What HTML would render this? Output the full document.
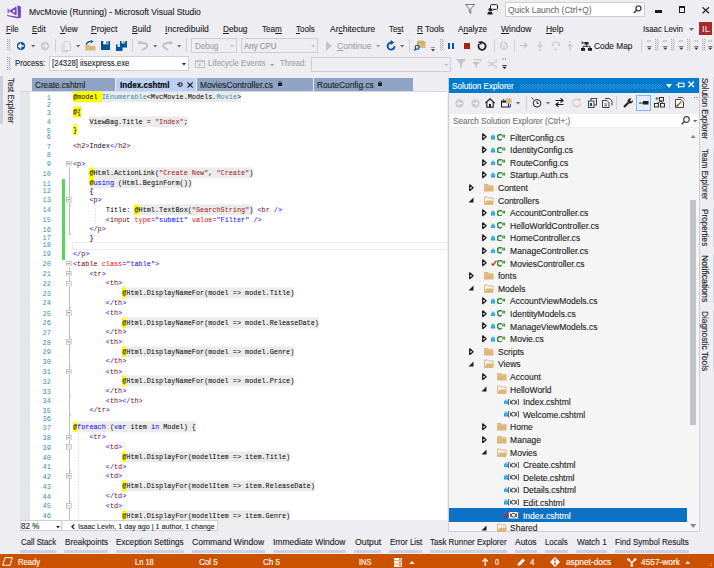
<!DOCTYPE html><html><head><meta charset="utf-8"><style>
html,body{margin:0;padding:0;}
body{width:714px;height:568px;position:relative;overflow:hidden;background:#EEEEF2;font-family:"Liberation Sans",sans-serif;}
.t{position:absolute;white-space:pre;line-height:1;-webkit-text-stroke:0.12px currentColor;}
.b{position:absolute;}
.m{font-family:"Liberation Mono",monospace;}
u{text-decoration:underline;text-decoration-thickness:0.9px;text-underline-offset:1px;}
</style></head><body>
<svg class="b" style="left:6px;top:4px;" width="16" height="16" viewBox="0 0 16 16"><path d="M11.4 1.2 L14.9 2.4 V13.6 L12 14.6 Z" fill="#7646C2"/><path d="M1 11 L11.5 12.7 L12 14.6 L1 11.9 Z" fill="#7646C2"/><path d="M1.5 4 L4.8 7 L1.5 10 Z" fill="#9A7AD4"/><path d="M4.6 7 L9.8 3.6 V10.4 Z" fill="none" stroke="#7646C2" stroke-width="1.6" stroke-linejoin="round"/></svg>
<div class="t " style="left:29.40px;top:8.04px;font-size:8.7px;color:#1E1E1E;transform-origin:0 0;transform:scaleX(0.9782);">MvcMovie (Running) - Microsoft Visual Studio</div>
<svg class="b" style="left:465px;top:4px;" width="10" height="10" viewBox="0 0 10 10"><path d="M0.5 0.5 H9.5 L5.8 5 V9.5 L4.2 8 V5 Z" fill="none" stroke="#717171" stroke-width="0.9"/></svg>
<svg class="b" style="left:487px;top:3.5px;" width="11" height="11" viewBox="0 0 11 11"><rect x="3.5" y="0.7" width="7" height="4.6" rx="1" fill="#fff" stroke="#1E1E1E" stroke-width="1"/><path d="M5 5.3 L4.5 7 L7 5.3" fill="#fff" stroke="#1E1E1E" stroke-width="0.8"/><circle cx="3" cy="5.5" r="1.6" fill="#1E1E1E"/><path d="M0.3 10.5 Q0.5 7.5 3 7.5 Q5.5 7.5 5.7 10.5 Z" fill="#1E1E1E"/></svg>
<div class="b" style="left:504.5px;top:1.5px;width:140px;height:15px;background:#fff;border:1px solid #CCCEDB;box-sizing:border-box;"></div>
<div class="t " style="left:508.30px;top:5.52px;font-size:8.6px;color:#717171;transform-origin:0 0;transform:scaleX(0.9757);">Quick Launch (Ctrl+Q)</div>
<svg class="b" style="left:633px;top:5px;" width="9" height="9" viewBox="0 0 9 9"><circle cx="5.5" cy="3.3" r="2.5" fill="none" stroke="#424242" stroke-width="1.3"/><path d="M3.7 5.1 L0.8 8" stroke="#424242" stroke-width="1.6"/></svg>
<div class="b" style="left:654.6px;top:9.8px;width:7px;height:2.8px;background:#1E1E1E;"></div>
<div class="b" style="left:678.7px;top:6.3px;width:6.8px;height:6.6px;border:1px solid #1E1E1E;border-top-width:2px;box-sizing:border-box;"></div>
<svg class="b" style="left:702px;top:7px;" width="7.5" height="6.5" viewBox="0 0 7.5 6.5"><path d="M0.5 0.3 L7 6.2 M7 0.3 L0.5 6.2" stroke="#1E1E1E" stroke-width="1.2"/></svg>
<div class="t " style="left:5.50px;top:24.64px;font-size:8.7px;color:#1E1E1E;transform-origin:0 0;transform:scaleX(0.8989);"><u>F</u>ile</div>
<div class="t " style="left:32.20px;top:24.64px;font-size:8.7px;color:#1E1E1E;transform-origin:0 0;transform:scaleX(0.9072);"><u>E</u>dit</div>
<div class="t " style="left:60.00px;top:24.64px;font-size:8.7px;color:#1E1E1E;transform-origin:0 0;transform:scaleX(0.9412);"><u>V</u>iew</div>
<div class="t " style="left:91.20px;top:24.64px;font-size:8.7px;color:#1E1E1E;transform-origin:0 0;transform:scaleX(0.9750);"><u>P</u>roject</div>
<div class="t " style="left:131.50px;top:24.64px;font-size:8.7px;color:#1E1E1E;transform-origin:0 0;transform:scaleX(0.9770);"><u>B</u>uild</div>
<div class="t " style="left:164.50px;top:24.64px;font-size:8.7px;color:#1E1E1E;transform-origin:0 0;transform:scaleX(0.9867);"><u>I</u>ncredibuild</div>
<div class="t " style="left:222.50px;top:24.64px;font-size:8.7px;color:#1E1E1E;transform-origin:0 0;transform:scaleX(0.9518);"><u>D</u>ebug</div>
<div class="t " style="left:261.50px;top:24.64px;font-size:8.7px;color:#1E1E1E;transform-origin:0 0;transform:scaleX(0.9355);">Tea<u>m</u></div>
<div class="t " style="left:296.00px;top:24.64px;font-size:8.7px;color:#1E1E1E;transform-origin:0 0;transform:scaleX(0.9306);"><u>T</u>ools</div>
<div class="t " style="left:329.60px;top:24.64px;font-size:8.7px;color:#1E1E1E;transform-origin:0 0;transform:scaleX(0.9760);">Ar<u>c</u>hitecture</div>
<div class="t " style="left:389.30px;top:24.64px;font-size:8.7px;color:#1E1E1E;transform-origin:0 0;transform:scaleX(0.8963);">Te<u>s</u>t</div>
<div class="t " style="left:417.00px;top:24.64px;font-size:8.7px;color:#1E1E1E;transform-origin:0 0;transform:scaleX(0.9428);"><u>R</u> Tools</div>
<div class="t " style="left:458.00px;top:24.64px;font-size:8.7px;color:#1E1E1E;transform-origin:0 0;transform:scaleX(0.9370);">A<u>n</u>alyze</div>
<div class="t " style="left:501.30px;top:24.64px;font-size:8.7px;color:#1E1E1E;transform-origin:0 0;transform:scaleX(0.9857);"><u>W</u>indow</div>
<div class="t " style="left:545.60px;top:24.64px;font-size:8.7px;color:#1E1E1E;transform-origin:0 0;transform:scaleX(0.9725);"><u>H</u>elp</div>
<div class="t " style="left:643.30px;top:24.64px;font-size:8.7px;color:#1E1E1E;transform-origin:0 0;transform:scaleX(0.9089);">Isaac Levin</div>
<svg class="b" style="left:688.5px;top:28px;" width="5" height="3" viewBox="0 0 5 3"><path d="M0 0 H5 L2.5 3 Z" fill="#717171"/></svg>
<div class="b" style="left:698.8px;top:21.9px;width:13.6px;height:13.5px;background:#A8282B;"></div>
<div class="t " style="left:701.60px;top:24.92px;font-size:8.6px;color:#F4E4E4;transform-origin:0 0;transform:scaleX(1.1155);-webkit-text-stroke:0;">IL</div>
<svg class="b" style="left:7px;top:39px;" width="4" height="12" viewBox="0 0 4 12"><pattern id="g109" width="2" height="2" patternUnits="userSpaceOnUse"><rect x="0" y="0" width="1" height="1" fill="#A8A8B0"/><rect x="1" y="1" width="1" height="1" fill="#D0D0D6"/></pattern><rect width="4" height="12" fill="url(#g109)"/></svg>
<svg class="b" style="left:16px;top:41px;" width="10" height="10" viewBox="0 0 10 10"><circle cx="5" cy="5" r="4.7" fill="#fff"/><circle cx="5" cy="5" r="4.1" fill="#00539C"/><path d="M7.8 5 H3 M5.2 2.6 L2.7 5 L5.2 7.4" stroke="#fff" stroke-width="1.5" fill="none"/></svg>
<svg class="b" style="left:30.9px;top:45.3px;" width="4.2" height="2.5" viewBox="0 0 4.2 2.5"><path d="M0 0 H4.2 L2.1 2.5 Z" fill="#717171"/></svg>
<svg class="b" style="left:40px;top:41px;" width="10" height="10" viewBox="0 0 10 10"><circle cx="5" cy="5" r="4.2" fill="#C8C8C8"/><path d="M2.3 5 H7 M4.8 2.8 L7.1 5 L4.8 7.2" stroke="#EEEEF2" stroke-width="1.3" fill="none"/></svg>
<div class="b" style="left:54.5px;top:39px;width:1px;height:13px;background:#CCCEDB;"></div>
<svg class="b" style="left:61px;top:40px;" width="11" height="12" viewBox="0 0 11 12"><path d="M3 1.5 H7 L9.5 4 V10.5 H3 Z" fill="none" stroke="#D0D0D0" stroke-width="1"/><path d="M1 3.5 V11.5 H7" fill="none" stroke="#D0D0D0" stroke-width="1"/></svg>
<svg class="b" style="left:75.9px;top:45.3px;" width="4.2" height="2.5" viewBox="0 0 4.2 2.5"><path d="M0 0 H4.2 L2.1 2.5 Z" fill="#717171"/></svg>
<svg class="b" style="left:85px;top:40px;" width="11" height="11" viewBox="0 0 11 11"><path d="M0.5 5 H4 L5 6 H10.5 V10.5 H0.5 Z" fill="#DCB67A"/><path d="M1 4.5 Q3 0.8 7 1.5" fill="none" stroke="#00539C" stroke-width="1.3"/><path d="M6 0 L8.5 1.6 L6.3 3.3 Z" fill="#00539C"/></svg>
<svg class="b" style="left:100.8px;top:41px;" width="9.5" height="9" viewBox="0 0 9.5 9"><path d="M0 0 H9.5 V9 H0 Z" fill="#00539C"/><rect x="2.3" y="0" width="5" height="3.3" fill="#fff"/><rect x="5.2" y="0.5" width="1.3" height="2.3" fill="#00539C"/></svg>
<svg class="b" style="left:116px;top:40.5px;" width="11" height="10" viewBox="0 0 11 10"><path d="M0 3.5 H6.5 V10 H0 Z" fill="#00539C"/><rect x="1.6" y="3.5" width="3.3" height="2.3" fill="#fff"/><path d="M4 0 H11 V6.5 H4 Z" fill="#00539C"/><rect x="5.6" y="0" width="3.6" height="2.4" fill="#fff"/><rect x="7.3" y="0.4" width="1" height="1.6" fill="#00539C"/></svg>
<div class="b" style="left:131.5px;top:39px;width:1px;height:13px;background:#CCCEDB;"></div>
<svg class="b" style="left:137.5px;top:41px;" width="10.5" height="9.5" viewBox="0 0 10.5 9.5"><path d="M0.3 0.2 H3.8 L0.3 3.7 Z" fill="#BDBDBD"/><path d="M1.5 2.2 H5.5 Q9.3 2.2 9.3 5 Q9.3 6.8 4 8.8" fill="none" stroke="#BDBDBD" stroke-width="1.7"/></svg>
<svg class="b" style="left:152.9px;top:45.3px;" width="4.2" height="2.5" viewBox="0 0 4.2 2.5"><path d="M0 0 H4.2 L2.1 2.5 Z" fill="#717171"/></svg>
<svg class="b" style="left:162px;top:41px;" width="10.5" height="9.5" viewBox="0 0 10.5 9.5"><path d="M6.7 0.2 H10.2 V3.7 Z" fill="#BDBDBD"/><path d="M9 2.2 H5 Q1.2 2.2 1.2 5 Q1.2 6.8 6.5 8.8" fill="none" stroke="#BDBDBD" stroke-width="1.7"/></svg>
<svg class="b" style="left:176.9px;top:45.3px;" width="4.2" height="2.5" viewBox="0 0 4.2 2.5"><path d="M0 0 H4.2 L2.1 2.5 Z" fill="#717171"/></svg>
<div class="b" style="left:186px;top:39px;width:1px;height:13px;background:#CCCEDB;"></div>
<div class="b" style="left:191px;top:38px;width:46px;height:15px;border:1px solid #CCCEDB;box-sizing:border-box;"></div>
<div class="t " style="left:194.50px;top:41.97px;font-size:8.3px;color:#A2A4A5;transform-origin:0 0;transform:scaleX(0.9609);">Debug</div>
<svg class="b" style="left:230.4px;top:45.3px;" width="4.2" height="2.5" viewBox="0 0 4.2 2.5"><path d="M0 0 H4.2 L2.1 2.5 Z" fill="#C4C4C4"/></svg>
<div class="b" style="left:241px;top:38px;width:76.5px;height:15px;border:1px solid #CCCEDB;box-sizing:border-box;"></div>
<div class="t " style="left:243.90px;top:41.97px;font-size:8.3px;color:#8E9092;transform-origin:0 0;transform:scaleX(0.9522);">Any CPU</div>
<svg class="b" style="left:311.4px;top:45.3px;" width="4.2" height="2.5" viewBox="0 0 4.2 2.5"><path d="M0 0 H4.2 L2.1 2.5 Z" fill="#C4C4C4"/></svg>
<svg class="b" style="left:325.5px;top:40.5px;" width="6" height="10" viewBox="0 0 6 10"><path d="M0 0 L6 5 L0 10 Z" fill="#C4C4C4"/></svg>
<div class="t " style="left:337.00px;top:41.97px;font-size:8.3px;color:#A2A4A5;transform-origin:0 0;transform:scaleX(1.0415);"><u>C</u>ontinue</div>
<svg class="b" style="left:375.9px;top:45.3px;" width="4.2" height="2.5" viewBox="0 0 4.2 2.5"><path d="M0 0 H4.2 L2.1 2.5 Z" fill="#A2A4A5"/></svg>
<svg class="b" style="left:385.5px;top:40px;" width="10" height="11" viewBox="0 0 10 11"><path d="M5.3 2.6 A3.5 3.5 0 1 0 8.6 6.3" fill="none" stroke="#00539C" stroke-width="1.9"/><path d="M4.6 0 L8.4 2.5 L4.6 5 Z" fill="#00539C"/></svg>
<svg class="b" style="left:399.9px;top:45.3px;" width="4.2" height="2.5" viewBox="0 0 4.2 2.5"><path d="M0 0 H4.2 L2.1 2.5 Z" fill="#717171"/></svg>
<div class="b" style="left:408.7px;top:39px;width:1px;height:13px;background:#CCCEDB;"></div>
<svg class="b" style="left:414px;top:40px;" width="12" height="11" viewBox="0 0 12 11"><path d="M3 0.5 H10 V1.5 H11.5 V8 H3 Z" fill="#DCB67A"/><rect x="3" y="2" width="8.5" height="1" fill="#C9A160"/><circle cx="3.2" cy="7.2" r="2" fill="none" stroke="#00539C" stroke-width="1.1"/><path d="M1.8 8.8 L0.3 10.5" stroke="#00539C" stroke-width="1.3"/></svg>
<svg class="b" style="left:430.5px;top:47px;" width="4" height="5" viewBox="0 0 4 5"><rect x="0" y="0" width="4" height="1" fill="#999"/><path d="M0 2 H4 L2 4.5 Z" fill="#424242"/></svg>
<svg class="b" style="left:439.5px;top:39px;" width="4" height="12" viewBox="0 0 4 12"><pattern id="g4434" width="2" height="2" patternUnits="userSpaceOnUse"><rect x="0" y="0" width="1" height="1" fill="#A8A8B0"/><rect x="1" y="1" width="1" height="1" fill="#D0D0D6"/></pattern><rect width="4" height="12" fill="url(#g4434)"/></svg>
<div class="b" style="left:448px;top:42.5px;width:2px;height:6.5px;background:#00539C;"></div>
<div class="b" style="left:451.5px;top:42.5px;width:2px;height:6.5px;background:#00539C;"></div>
<div class="b" style="left:463.6px;top:42.5px;width:6.5px;height:6.5px;background:#A1260D;"></div>
<svg class="b" style="left:477px;top:40.5px;" width="10" height="10" viewBox="0 0 10 10"><path d="M2.2 3 A3.6 3.6 0 1 0 5 1.6" fill="none" stroke="#1E1E1E" stroke-width="1.7"/><path d="M5.5 0 L1 0.8 L4 4 Z" fill="#1E1E1E"/></svg>
<div class="b" style="left:493.8px;top:39px;width:1px;height:13px;background:#CCCEDB;"></div>
<svg class="b" style="left:498.5px;top:40.5px;" width="9" height="10" viewBox="0 0 9 10"><path d="M2.5 3 A3.3 3.3 0 1 0 5 1.8" fill="none" stroke="#C4C4C4" stroke-width="1.2"/><path d="M4 0 L1.5 1.2 L3.5 3 Z" fill="#C4C4C4"/><circle cx="5" cy="5.5" r="0.9" fill="#C4C4C4"/></svg>
<div class="b" style="left:514px;top:39px;width:1px;height:13px;background:#CCCEDB;"></div>
<svg class="b" style="left:519.5px;top:42px;" width="8" height="7" viewBox="0 0 8 7"><path d="M0 3.5 H7 M4 0.7 L7 3.5 L4 6.3" fill="none" stroke="#C4C4C4" stroke-width="1.1"/></svg>
<svg class="b" style="left:536.5px;top:40.5px;" width="6" height="10" viewBox="0 0 6 10"><path d="M3 0 V6 M0.7 3.8 L3 6.3 L5.3 3.8" fill="none" stroke="#C4C4C4" stroke-width="1.1"/><circle cx="3" cy="8.7" r="1" fill="#C4C4C4"/></svg>
<svg class="b" style="left:550.5px;top:40.5px;" width="9" height="10" viewBox="0 0 9 10"><path d="M1 5 Q2 1 5 1 Q8 1 8.3 4.5" fill="none" stroke="#C4C4C4" stroke-width="1.1"/><path d="M6.5 3.5 L8.5 5.5 L9 3 Z" fill="#C4C4C4"/><circle cx="4.5" cy="8.5" r="1" fill="#C4C4C4"/></svg>
<svg class="b" style="left:567px;top:40.5px;" width="6" height="10" viewBox="0 0 6 10"><path d="M3 10 V3.5 M0.7 5.7 L3 3.2 L5.3 5.7" fill="none" stroke="#C4C4C4" stroke-width="1.1"/><circle cx="3" cy="0.9" r="0.9" fill="#C4C4C4"/></svg>
<svg class="b" style="left:580.5px;top:40.5px;" width="11" height="10" viewBox="0 0 11 10"><path d="M0.5 0 L4 1.8 L0.5 3.6 Z" fill="#388A34"/><rect x="3.5" y="1" width="4" height="2.5" fill="#1E1E1E"/><path d="M5.5 3.5 V5.3 M2 7 V5.3 H9 V7" fill="none" stroke="#1E1E1E" stroke-width="0.9"/><rect x="0" y="7" width="4" height="2.8" fill="#1E1E1E"/><rect x="7" y="7" width="4" height="2.8" fill="#1E1E1E"/></svg>
<div class="t " style="left:593.80px;top:41.80px;font-size:8.5px;color:#1E1E1E;transform-origin:0 0;transform:scaleX(0.9818);">Code Map</div>
<div class="b" style="left:640.6px;top:39px;width:1px;height:13px;background:#CCCEDB;"></div>
<svg class="b" style="left:646.5px;top:39.5px;" width="5" height="11" viewBox="0 0 5 11"><rect x="0.5" y="0.5" width="1" height="1" fill="#717171"/><rect x="2.8" y="0.5" width="1" height="1" fill="#717171"/><rect x="0.3" y="6" width="4" height="1.2" fill="#717171"/><path d="M0.3 7.8 H4.3 L2.3 10 Z" fill="#424242"/></svg>
<svg class="b" style="left:663px;top:39.5px;" width="5" height="11" viewBox="0 0 5 11"><rect x="0.5" y="0.5" width="1" height="1" fill="#717171"/><rect x="2.8" y="0.5" width="1" height="1" fill="#717171"/><rect x="0.3" y="6" width="4" height="1.2" fill="#717171"/><path d="M0.3 7.8 H4.3 L2.3 10 Z" fill="#424242"/></svg>
<svg class="b" style="left:679px;top:39.5px;" width="5" height="11" viewBox="0 0 5 11"><rect x="0.5" y="0.5" width="1" height="1" fill="#717171"/><rect x="2.8" y="0.5" width="1" height="1" fill="#717171"/><rect x="0.3" y="6" width="4" height="1.2" fill="#717171"/><path d="M0.3 7.8 H4.3 L2.3 10 Z" fill="#424242"/></svg>
<svg class="b" style="left:693.5px;top:39.5px;" width="5" height="11" viewBox="0 0 5 11"><rect x="0.5" y="0.5" width="1" height="1" fill="#717171"/><rect x="2.8" y="0.5" width="1" height="1" fill="#717171"/><rect x="0.3" y="6" width="4" height="1.2" fill="#717171"/><path d="M0.3 7.8 H4.3 L2.3 10 Z" fill="#424242"/></svg>
<svg class="b" style="left:708px;top:39.5px;" width="5" height="11" viewBox="0 0 5 11"><rect x="0.5" y="0.5" width="1" height="1" fill="#717171"/><rect x="2.8" y="0.5" width="1" height="1" fill="#717171"/><rect x="0.3" y="6" width="4" height="1.2" fill="#717171"/><path d="M0.3 7.8 H4.3 L2.3 10 Z" fill="#424242"/></svg>
<svg class="b" style="left:655px;top:39px;" width="4" height="12" viewBox="0 0 4 12"><pattern id="g6589" width="2" height="2" patternUnits="userSpaceOnUse"><rect x="0" y="0" width="1" height="1" fill="#A8A8B0"/><rect x="1" y="1" width="1" height="1" fill="#D0D0D6"/></pattern><rect width="4" height="12" fill="url(#g6589)"/></svg>
<svg class="b" style="left:671px;top:39px;" width="4" height="12" viewBox="0 0 4 12"><pattern id="g6749" width="2" height="2" patternUnits="userSpaceOnUse"><rect x="0" y="0" width="1" height="1" fill="#A8A8B0"/><rect x="1" y="1" width="1" height="1" fill="#D0D0D6"/></pattern><rect width="4" height="12" fill="url(#g6749)"/></svg>
<svg class="b" style="left:687px;top:39px;" width="4" height="12" viewBox="0 0 4 12"><pattern id="g6909" width="2" height="2" patternUnits="userSpaceOnUse"><rect x="0" y="0" width="1" height="1" fill="#A8A8B0"/><rect x="1" y="1" width="1" height="1" fill="#D0D0D6"/></pattern><rect width="4" height="12" fill="url(#g6909)"/></svg>
<svg class="b" style="left:702px;top:39px;" width="4" height="12" viewBox="0 0 4 12"><pattern id="g7059" width="2" height="2" patternUnits="userSpaceOnUse"><rect x="0" y="0" width="1" height="1" fill="#A8A8B0"/><rect x="1" y="1" width="1" height="1" fill="#D0D0D6"/></pattern><rect width="4" height="12" fill="url(#g7059)"/></svg>
<svg class="b" style="left:7px;top:56.5px;" width="4" height="13" viewBox="0 0 4 13"><pattern id="g126" width="2" height="2" patternUnits="userSpaceOnUse"><rect x="0" y="0" width="1" height="1" fill="#A8A8B0"/><rect x="1" y="1" width="1" height="1" fill="#D0D0D6"/></pattern><rect width="4" height="13" fill="url(#g126)"/></svg>
<div class="t " style="left:14.60px;top:59.25px;font-size:8.8px;color:#1E1E1E;transform-origin:0 0;transform:scaleX(0.8822);">Process:</div>
<div class="b" style="left:49px;top:56.2px;width:139.5px;height:15px;background:#fff;border:1px solid #CCCEDB;box-sizing:border-box;"></div>
<div class="t " style="left:51.60px;top:59.25px;font-size:8.8px;color:#1E1E1E;transform-origin:0 0;transform:scaleX(0.8840);">[24328] iisexpress.exe</div>
<svg class="b" style="left:182px;top:63px;" width="4" height="2.5" viewBox="0 0 4 2.5"><path d="M0 0 H4 L2 2.5 Z" fill="#1E1E1E"/></svg>
<svg class="b" style="left:194.8px;top:59.5px;" width="10" height="8" viewBox="0 0 10 8"><rect x="0.5" y="0.5" width="9" height="7" fill="none" stroke="#C4C4C4" stroke-width="1"/><rect x="0.5" y="0.5" width="9" height="1.6" fill="#C4C4C4"/><path d="M5.5 3 L3.5 5 H5.5 L4 6.8" fill="none" stroke="#B0B0B0" stroke-width="0.8"/></svg>
<div class="t " style="left:208.40px;top:59.25px;font-size:8.8px;color:#A2A4A5;transform-origin:0 0;transform:scaleX(0.9028);">Lifecycle Events</div>
<svg class="b" style="left:269.9px;top:63.8px;" width="4.2" height="2.5" viewBox="0 0 4.2 2.5"><path d="M0 0 H4.2 L2.1 2.5 Z" fill="#A2A4A5"/></svg>
<div class="t " style="left:279.60px;top:59.25px;font-size:8.8px;color:#A2A4A5;transform-origin:0 0;transform:scaleX(0.8706);">Thread:</div>
<div class="b" style="left:311.3px;top:56.5px;width:139.7px;height:15px;border:1px solid #CCCEDB;box-sizing:border-box;"></div>
<svg class="b" style="left:443.9px;top:63.8px;" width="4.2" height="2.5" viewBox="0 0 4.2 2.5"><path d="M0 0 H4.2 L2.1 2.5 Z" fill="#C4C4C4"/></svg>
<svg class="b" style="left:456px;top:58.5px;" width="10" height="10" viewBox="0 0 10 10"><path d="M0 0 H10 L6 4.8 V9.5 L4 7.5 V4.8 Z" fill="#C4C4C4"/></svg>
<svg class="b" style="left:471.5px;top:58.5px;" width="10" height="10" viewBox="0 0 10 10"><path d="M2 0.8 H10" stroke="#C4C4C4" stroke-width="1"/><path d="M0 3 H8 L5 6 V9.5 L3.5 8 V6 Z" fill="#C4C4C4"/><path d="M7.5 3.5 L9.5 1.5" stroke="#C4C4C4"/></svg>
<svg class="b" style="left:487px;top:59.5px;" width="10" height="8" viewBox="0 0 10 8"><path d="M0.5 2 Q3 2 5 4 Q7 6 9.5 6 M0.5 6 Q3 6 5 4 Q7 2 9.5 2" fill="none" stroke="#C4C4C4" stroke-width="1.1"/><path d="M8 0 L10 0 L10 2 Z M8 8 L10 8 L10 6 Z" fill="#C4C4C4"/></svg>
<svg class="b" style="left:502px;top:58px;" width="5" height="12" viewBox="0 0 5 12"><rect x="0.5" y="0.5" width="1" height="1" fill="#424242"/><rect x="3" y="0.5" width="1" height="1" fill="#424242"/><rect x="0.3" y="7" width="4.4" height="1" fill="#424242"/><path d="M0.3 8.8 H4.7 L2.5 11 Z" fill="#1E1E1E"/></svg>
<div class="b" style="left:0px;top:76px;width:2.8px;height:47.7px;background:#CDD0DE;"></div>
<div class="t" style="left:0px;top:78px;font-size:8.7px;color:#1E1E1E;transform-origin:0 0;transform:translate(14.56px,0) rotate(90deg) scaleX(0.8963);">Test Explorer</div>
<div class="b" style="left:31.5px;top:77.9px;width:83.7px;height:12.9px;background:#8FA4C4;"></div>
<div class="t " style="left:34.70px;top:81.22px;font-size:8.6px;color:#1E1E1E;transform-origin:0 0;transform:scaleX(0.9501);">Create.cshtml</div>
<div class="b" style="left:115.6px;top:77.9px;width:80.1px;height:13.6px;background:#BBD0F0;"></div>
<div class="t " style="left:119.50px;top:81.32px;font-size:8.6px;color:#000;transform-origin:0 0;transform:scaleX(0.9436);"><b>Index.cshtml</b></div>
<svg class="b" style="left:177px;top:81.5px;" width="6" height="5" viewBox="0 0 6 5"><path d="M0 2.5 H2 M2 0.3 V4.7 M2 1 H5 V4 H2" fill="none" stroke="#1E1E1E" stroke-width="1"/></svg>
<svg class="b" style="left:186.7px;top:81.5px;" width="6.2" height="6" viewBox="0 0 6.2 6"><path d="M0.5 0.5 L5.7 5.5 M5.7 0.5 L0.5 5.5" stroke="#1E1E1E" stroke-width="1.1"/></svg>
<div class="b" style="left:197px;top:77.9px;width:116.1px;height:12.9px;background:#8FA4C4;"></div>
<div class="t " style="left:199.80px;top:81.22px;font-size:8.6px;color:#1E1E1E;transform-origin:0 0;transform:scaleX(0.9729);">MoviesController.cs</div>
<svg class="b" style="left:278px;top:81px;" width="4" height="5" viewBox="0 0 4 5"><rect x="0" y="1.8" width="4" height="3.2" fill="#1E1E1E"/><path d="M0.8 2 V1.2 Q2 -0.2 3.2 1.2 V2" fill="none" stroke="#1E1E1E" stroke-width="0.7"/></svg>
<div class="b" style="left:314.1px;top:77.9px;width:98.9px;height:12.9px;background:#8FA4C4;"></div>
<div class="t " style="left:316.60px;top:81.22px;font-size:8.6px;color:#1E1E1E;transform-origin:0 0;transform:scaleX(0.9644);">RouteConfig.cs</div>
<svg class="b" style="left:378.2px;top:81px;" width="4" height="5" viewBox="0 0 4 5"><rect x="0" y="1.8" width="4" height="3.2" fill="#1E1E1E"/><path d="M0.8 2 V1.2 Q2 -0.2 3.2 1.2 V2" fill="none" stroke="#1E1E1E" stroke-width="0.7"/></svg>
<div class="b" style="left:20px;top:90.9px;width:426.3px;height:1px;background:#D2D5E2;"></div>
<div class="b" style="left:115.6px;top:90.5px;width:80.1px;height:1.5px;background:#BBD0F0;"></div>
<div class="b" style="left:20px;top:91.8px;width:426.5px;height:428.2px;background:#fff;"></div>
<div class="b" style="left:20px;top:91.8px;width:9.7px;height:428.2px;background:#E4E5EA;"></div>
<style>
.code{font-family:"Liberation Mono",monospace;font-size:6.833px;line-height:1;position:absolute;white-space:pre;color:#000;transform-origin:0 5.24px;transform:scaleY(1.08);}
.code span{display:inline;}
.bl{color:#0000FF}.mr{color:#800000}.rd{color:#FF0000}.st{color:#A31515}.tl{color:#2B91AF}
.g{background:#EBEBEB;padding:0.9px 0 0.5px 0}.at{background:#FFFF00;padding:0.9px 0 0.5px 0}.gl{background:#F3F3F3;padding:0.9px 0 0.5px 0}
.ln{font-family:"Liberation Mono",monospace;font-size:6.833px;line-height:1;position:absolute;white-space:pre;color:#2B91AF;text-align:right;width:30px;transform-origin:0 5.24px;transform:scaleY(1.1);}
</style>
<div class="ln" style="left:20.80px;top:94.52px">1</div>
<div class="code" style="left:73px;top:94.02px"><span class="at">@model </span><span class="tl g">IEnumerable</span><span class="g">&lt;MvcMovie.Models.</span><span class="tl g">Movie</span><span class="g">&gt;</span></div>
<div class="ln" style="left:20.80px;top:101.92px">2</div>
<div class="ln" style="left:20.80px;top:109.92px">3</div>
<div class="code" style="left:73px;top:109.42px"><span class="at">@{</span></div>
<div class="ln" style="left:20.80px;top:119.02px">4</div>
<div class="code" style="left:73px;top:118.52px">    <span class="g">ViewBag.Title = </span><span class="st g">&quot;Index&quot;</span><span class="g">;</span></div>
<div class="ln" style="left:20.80px;top:127.72px">5</div>
<div class="code" style="left:73px;top:127.22px"><span class="at">}</span></div>
<div class="ln" style="left:20.80px;top:134.42px">6</div>
<div class="ln" style="left:20.80px;top:143.52px">7</div>
<div class="code" style="left:73px;top:143.02px"><span class="bl">&lt;</span><span class="mr">h2</span><span class="bl">&gt;</span>Index<span class="bl">&lt;/</span><span class="mr">h2</span><span class="bl">&gt;</span></div>
<div class="ln" style="left:20.80px;top:151.92px">8</div>
<div class="ln" style="left:20.80px;top:161.02px">9</div>
<div class="code" style="left:73px;top:160.52px"><span class="bl">&lt;</span><span class="mr">p</span><span class="bl">&gt;</span></div>
<div class="ln" style="left:20.80px;top:170.92px">10</div>
<div class="code" style="left:73px;top:170.42px">    <span class="at">@</span><span class="g">Html.ActionLink(</span><span class="st g">&quot;Create New&quot;</span><span class="g">, </span><span class="st g">&quot;Create&quot;</span><span class="g">)</span></div>
<div class="ln" style="left:20.80px;top:180.82px">11</div>
<div class="code" style="left:73px;top:180.32px">    <span class="at">@</span><span class="bl g">using</span><span class="g"> (Html.BeginForm())</span></div>
<div class="ln" style="left:20.80px;top:188.22px">12</div>
<div class="code" style="left:73px;top:187.72px">    <span class="gl">{</span></div>
<div class="ln" style="left:20.80px;top:197.32px">13</div>
<div class="code" style="left:73px;top:196.82px">    <span class="bl">&lt;</span><span class="mr">p</span><span class="bl">&gt;</span></div>
<div class="ln" style="left:20.80px;top:207.22px">14</div>
<div class="code" style="left:73px;top:206.72px">        Title: <span class="at">@</span><span class="g">Html.TextBox(</span><span class="st g">&quot;SearchString&quot;</span><span class="g">)</span> <span class="bl">&lt;</span><span class="mr">br</span><span class="bl"> /&gt;</span></div>
<div class="ln" style="left:20.80px;top:217.02px">15</div>
<div class="code" style="left:73px;top:216.52px">        <span class="bl">&lt;</span><span class="mr">input</span> <span class="rd">type</span><span class="bl">=&quot;submit&quot;</span> <span class="rd">value</span><span class="bl">=&quot;Filter&quot;</span><span class="bl"> /&gt;</span></div>
<div class="ln" style="left:20.80px;top:226.92px">16</div>
<div class="code" style="left:73px;top:226.42px">    <span class="bl">&lt;/</span><span class="mr">p</span><span class="bl">&gt;</span></div>
<div class="ln" style="left:20.80px;top:235.02px">17</div>
<div class="code" style="left:73px;top:234.52px">    <span class="gl">}</span></div>
<div class="ln" style="left:20.80px;top:242.12px">18</div>
<div class="ln" style="left:20.80px;top:251.12px">19</div>
<div class="code" style="left:73px;top:250.62px"><span class="bl">&lt;/</span><span class="mr">p</span><span class="bl">&gt;</span></div>
<div class="ln" style="left:20.80px;top:261.22px">20</div>
<div class="code" style="left:73px;top:260.72px"><span class="bl">&lt;</span><span class="mr">table</span> <span class="rd">class</span><span class="bl">=&quot;table&quot;</span><span class="bl">&gt;</span></div>
<div class="ln" style="left:20.80px;top:271.22px">21</div>
<div class="code" style="left:73px;top:270.72px">    <span class="bl">&lt;</span><span class="mr">tr</span><span class="bl">&gt;</span></div>
<div class="ln" style="left:20.80px;top:280.82px">22</div>
<div class="code" style="left:73px;top:280.32px">        <span class="bl">&lt;</span><span class="mr">th</span><span class="bl">&gt;</span></div>
<div class="ln" style="left:20.80px;top:290.72px">23</div>
<div class="code" style="left:73px;top:290.22px">            <span class="at">@</span><span class="g">Html.DisplayNameFor(model =&gt; model.Title)</span></div>
<div class="ln" style="left:20.80px;top:300.22px">24</div>
<div class="code" style="left:73px;top:299.72px">        <span class="bl">&lt;/</span><span class="mr">th</span><span class="bl">&gt;</span></div>
<div class="ln" style="left:20.80px;top:310.52px">25</div>
<div class="code" style="left:73px;top:310.02px">        <span class="bl">&lt;</span><span class="mr">th</span><span class="bl">&gt;</span></div>
<div class="ln" style="left:20.80px;top:320.22px">26</div>
<div class="code" style="left:73px;top:319.72px">            <span class="at">@</span><span class="g">Html.DisplayNameFor(model =&gt; model.ReleaseDate)</span></div>
<div class="ln" style="left:20.80px;top:329.92px">27</div>
<div class="code" style="left:73px;top:329.42px">        <span class="bl">&lt;/</span><span class="mr">th</span><span class="bl">&gt;</span></div>
<div class="ln" style="left:20.80px;top:339.72px">28</div>
<div class="code" style="left:73px;top:339.22px">        <span class="bl">&lt;</span><span class="mr">th</span><span class="bl">&gt;</span></div>
<div class="ln" style="left:20.80px;top:349.22px">29</div>
<div class="code" style="left:73px;top:348.72px">            <span class="at">@</span><span class="g">Html.DisplayNameFor(model =&gt; model.Genre)</span></div>
<div class="ln" style="left:20.80px;top:358.92px">30</div>
<div class="code" style="left:73px;top:358.42px">        <span class="bl">&lt;/</span><span class="mr">th</span><span class="bl">&gt;</span></div>
<div class="ln" style="left:20.80px;top:369.02px">31</div>
<div class="code" style="left:73px;top:368.52px">        <span class="bl">&lt;</span><span class="mr">th</span><span class="bl">&gt;</span></div>
<div class="ln" style="left:20.80px;top:378.92px">32</div>
<div class="code" style="left:73px;top:378.42px">            <span class="at">@</span><span class="g">Html.DisplayNameFor(model =&gt; model.Price)</span></div>
<div class="ln" style="left:20.80px;top:388.72px">33</div>
<div class="code" style="left:73px;top:388.22px">        <span class="bl">&lt;/</span><span class="mr">th</span><span class="bl">&gt;</span></div>
<div class="ln" style="left:20.80px;top:398.42px">34</div>
<div class="code" style="left:73px;top:397.92px">        <span class="bl">&lt;</span><span class="mr">th</span><span class="bl">&gt;&lt;/</span><span class="mr">th</span><span class="bl">&gt;</span></div>
<div class="ln" style="left:20.80px;top:407.92px">35</div>
<div class="code" style="left:73px;top:407.42px">    <span class="bl">&lt;/</span><span class="mr">tr</span><span class="bl">&gt;</span></div>
<div class="ln" style="left:20.80px;top:415.82px">36</div>
<div class="ln" style="left:20.80px;top:424.92px">37</div>
<div class="code" style="left:73px;top:424.42px"><span class="at">@</span><span class="bl g">foreach</span><span class="g"> (</span><span class="bl g">var</span><span class="g"> item </span><span class="bl g">in</span><span class="g"> Model) {</span></div>
<div class="ln" style="left:20.80px;top:434.92px">38</div>
<div class="code" style="left:73px;top:434.42px">    <span class="bl">&lt;</span><span class="mr">tr</span><span class="bl">&gt;</span></div>
<div class="ln" style="left:20.80px;top:444.72px">39</div>
<div class="code" style="left:73px;top:444.22px">        <span class="bl">&lt;</span><span class="mr">td</span><span class="bl">&gt;</span></div>
<div class="ln" style="left:20.80px;top:454.52px">40</div>
<div class="code" style="left:73px;top:454.02px">            <span class="at">@</span><span class="g">Html.DisplayFor(modelItem =&gt; item.Title)</span></div>
<div class="ln" style="left:20.80px;top:464.02px">41</div>
<div class="code" style="left:73px;top:463.52px">        <span class="bl">&lt;/</span><span class="mr">td</span><span class="bl">&gt;</span></div>
<div class="ln" style="left:20.80px;top:473.72px">42</div>
<div class="code" style="left:73px;top:473.22px">        <span class="bl">&lt;</span><span class="mr">td</span><span class="bl">&gt;</span></div>
<div class="ln" style="left:20.80px;top:483.92px">43</div>
<div class="code" style="left:73px;top:483.42px">            <span class="at">@</span><span class="g">Html.DisplayFor(modelItem =&gt; item.ReleaseDate)</span></div>
<div class="ln" style="left:20.80px;top:493.62px">44</div>
<div class="code" style="left:73px;top:493.12px">        <span class="bl">&lt;/</span><span class="mr">td</span><span class="bl">&gt;</span></div>
<div class="ln" style="left:20.80px;top:503.32px">45</div>
<div class="code" style="left:73px;top:502.82px">        <span class="bl">&lt;</span><span class="mr">td</span><span class="bl">&gt;</span></div>
<div class="ln" style="left:20.80px;top:513.22px">46</div>
<div class="code" style="left:73px;top:512.72px">            <span class="at">@</span><span class="g">Html.DisplayFor(modelItem =&gt; item.Genre)</span></div>
<div class="b" style="left:448.4px;top:78.3px;width:251.6px;height:454px;background:#EEEEF2;border-left:1px solid #CCCEDB;border-right:1px solid #CCCEDB;border-bottom:1px solid #CCCEDB;box-sizing:border-box;"></div>
<div class="b" style="left:448.9px;top:78.3px;width:250.6px;height:14.5px;background:#007ACC;"></div>
<div class="t " style="left:452.20px;top:81.68px;font-size:9px;color:#FFFFFF;transform-origin:0 0;transform:scaleX(0.9017);">Solution Explorer</div>
<svg class="b" style="left:519.7px;top:83.8px" width="142" height="5"><pattern id="hdot" width="3" height="2" patternUnits="userSpaceOnUse"><rect x="0" y="0" width="1" height="1" fill="#4A9CD9"/><rect x="1.5" y="1" width="1" height="1" fill="#4A9CD9"/></pattern><rect width="142" height="5" fill="url(#hdot)"/></svg>
<svg class="b" style="left:665.5px;top:83.5px;" width="6" height="4" viewBox="0 0 6 4"><path d="M0 0 H6 L3 4 Z" fill="#fff"/></svg>
<svg class="b" style="left:676px;top:81px;" width="8.5" height="8" viewBox="0 0 8.5 8"><path d="M0 4 H2.5 M2.5 1 V7 M2.5 2.2 H8 V5.8 H2.5" fill="none" stroke="#fff" stroke-width="1.1"/></svg>
<svg class="b" style="left:688.4px;top:81.3px;" width="6.5" height="6.5" viewBox="0 0 6.5 6.5"><path d="M0.5 0.5 L6 6 M6 0.5 L0.5 6" stroke="#fff" stroke-width="1.3"/></svg>
<svg class="b" style="left:455.3px;top:98.6px;" width="9" height="9" viewBox="0 0 9 9"><circle cx="4.5" cy="4.5" r="4.2" fill="#CACACA"/><path d="M7 4.5 H2.5 M4.4 2.5 L2.4 4.5 L4.4 6.5" stroke="#EEEEF2" stroke-width="1.2" fill="none"/></svg>
<svg class="b" style="left:470.6px;top:98.6px;" width="9" height="9" viewBox="0 0 9 9"><circle cx="4.5" cy="4.5" r="4.2" fill="#CACACA"/><path d="M2 4.5 H6.5 M4.6 2.5 L6.6 4.5 L4.6 6.5" stroke="#EEEEF2" stroke-width="1.2" fill="none"/></svg>
<svg class="b" style="left:485.4px;top:97.5px;" width="10" height="10" viewBox="0 0 10 10"><path d="M0.5 5 L5 0.8 L9.5 5 M1.8 4 V9.3 H8.2 V4" fill="none" stroke="#1E1E1E" stroke-width="1.1"/><rect x="4" y="6" width="2" height="3.3" fill="#1E1E1E"/></svg>
<svg class="b" style="left:501px;top:97.5px;" width="11" height="10" viewBox="0 0 11 10"><rect x="0.5" y="3" width="7" height="6" fill="none" stroke="#1E1E1E" stroke-width="1"/><rect x="0.5" y="3" width="7" height="1.6" fill="#1E1E1E"/><rect x="5" y="0.5" width="5.5" height="5" fill="#DCB67A"/><path d="M9.5 6 V9 H7.5" fill="none" stroke="#00539C" stroke-width="1"/><path d="M2 0.5 L3.5 2 L2 2.5" fill="#00539C"/></svg>
<svg class="b" style="left:516.4px;top:102.3px;" width="4.2" height="2.5" viewBox="0 0 4.2 2.5"><path d="M0 0 H4.2 L2.1 2.5 Z" fill="#717171"/></svg>
<div class="b" style="left:525.5px;top:96px;width:1px;height:14px;background:#CCCEDB;"></div>
<svg class="b" style="left:531px;top:97px;" width="11" height="11" viewBox="0 0 11 11"><circle cx="6" cy="6.3" r="3.8" fill="none" stroke="#1E1E1E" stroke-width="1"/><path d="M6 4 V6.5 H7.8" fill="none" stroke="#1E1E1E" stroke-width="0.9"/><path d="M0.5 0.5 L2.5 2.5" stroke="#1E1E1E" stroke-width="1"/></svg>
<svg class="b" style="left:546.4px;top:102.3px;" width="4.2" height="2.5" viewBox="0 0 4.2 2.5"><path d="M0 0 H4.2 L2.1 2.5 Z" fill="#717171"/></svg>
<svg class="b" style="left:555px;top:98px;" width="9" height="9" viewBox="0 0 9 9"><path d="M0.5 2.5 H8 M5.5 0.3 L8 2.5 L5.5 4.5 M8.5 6.5 H1 M3.5 4.5 L1 6.5 L3.5 8.7" fill="none" stroke="#1E1E1E" stroke-width="1.2"/></svg>
<svg class="b" style="left:571.5px;top:98px;" width="9" height="9" viewBox="0 0 9 9"><path d="M7.4 2.6 A3.7 3.7 0 1 0 8.2 5.5" fill="none" stroke="#C4C4C4" stroke-width="1.1"/><path d="M5.3 0.5 L8.6 0.7 L8.2 4 Z" fill="#C4C4C4"/></svg>
<svg class="b" style="left:587.5px;top:97.5px;" width="10" height="10" viewBox="0 0 10 10"><rect x="3" y="0.5" width="5.5" height="6.5" fill="#EEEEF2" stroke="#424242" stroke-width="1"/><rect x="0.5" y="3" width="5.5" height="6.5" fill="#EEEEF2" stroke="#424242" stroke-width="1"/><rect x="2" y="5" width="2" height="3" fill="#00539C"/></svg>
<svg class="b" style="left:602px;top:97.5px;" width="11" height="10" viewBox="0 0 11 10"><path d="M0.5 2.5 H5 L7 4.5 V9.5 H0.5 Z" fill="none" stroke="#424242" stroke-width="1"/><path d="M3 0.5 H7.5 L10 3 V7.5" fill="none" stroke="#424242" stroke-width="1"/><path d="M2.5 6 H5 M2.5 7.8 H5" stroke="#424242" stroke-width="0.8"/></svg>
<div class="b" style="left:616.4px;top:96px;width:1px;height:14px;background:#CCCEDB;"></div>
<svg class="b" style="left:622.8px;top:97.5px;" width="10" height="10" viewBox="0 0 10 10"><path d="M1 9 L5.5 4.5" stroke="#1E1E1E" stroke-width="2.2"/><path d="M4.5 3.5 A3 3 0 0 1 8.5 0.5 L7 2.5 L8 3.5 L10 2.2 A3 3 0 0 1 6.5 5.5 Z" fill="#1E1E1E"/></svg>
<div class="b" style="left:635.5px;top:94.5px;width:15.4px;height:16.4px;border:1px solid #7AB8EE;background:#E3EEFA;box-sizing:border-box;"></div>
<svg class="b" style="left:638.5px;top:101px;" width="10" height="4" viewBox="0 0 10 4"><rect x="0" y="1.5" width="4" height="1" fill="#1E1E1E"/><rect x="4" y="0" width="5.5" height="3.5" fill="#1E1E1E"/></svg>
<svg class="b" style="left:654px;top:97px;" width="11" height="11" viewBox="0 0 11 11"><path d="M1.5 1.5 H4.5 M3 0 V3" stroke="#388A34" stroke-width="1.2"/><rect x="5.5" y="0.5" width="4" height="3.5" fill="none" stroke="#1E1E1E" stroke-width="0.9"/><rect x="0.5" y="6.5" width="4" height="3.5" fill="none" stroke="#1E1E1E" stroke-width="0.9"/><rect x="6.5" y="6.5" width="4" height="3.5" fill="none" stroke="#1E1E1E" stroke-width="0.9"/><path d="M7.5 4 L3 6.5 M7.5 4 L8.5 6.5" stroke="#1E1E1E" stroke-width="0.8"/></svg>
<div class="b" style="left:668.5px;top:96px;width:1px;height:14px;background:#CCCEDB;"></div>
<svg class="b" style="left:674.5px;top:97px;" width="10" height="11" viewBox="0 0 10 11"><path d="M0.5 2.5 H6 L8.5 5 V10.5 H0.5 Z" fill="#fff" stroke="#424242" stroke-width="1"/><path d="M3 0.5 H7.5 L9.5 2.5" fill="none" stroke="#424242" stroke-width="0.9"/><path d="M2 9 L6.5 4.5" stroke="#E05A28" stroke-width="1.6"/><path d="M1.5 9.5 L3.5 7.5" stroke="#388A34" stroke-width="1.6"/></svg>
<svg class="b" style="left:693.5px;top:96.5px;" width="5" height="2" viewBox="0 0 5 2"><rect x="0" y="0" width="1" height="1" fill="#717171"/><rect x="2.5" y="0" width="1" height="1" fill="#717171"/></svg>
<div class="b" style="left:449.5px;top:113.5px;width:249px;height:13.7px;background:#fff;"></div>
<div class="t " style="left:453.00px;top:116.80px;font-size:8.5px;color:#717171;transform-origin:0 0;transform:scaleX(0.9553);">Search Solution Explorer (Ctrl+;)</div>
<svg class="b" style="left:680.5px;top:116px;" width="9" height="9" viewBox="0 0 9 9"><circle cx="5.5" cy="3.5" r="2.8" fill="none" stroke="#424242" stroke-width="1.2"/><path d="M3.5 5.5 L0.7 8.3" stroke="#424242" stroke-width="1.6"/></svg>
<svg class="b" style="left:692.9px;top:120.3px;" width="4.2" height="2.5" viewBox="0 0 4.2 2.5"><path d="M0 0 H4.2 L2.1 2.5 Z" fill="#717171"/></svg>
<div class="b" style="left:449.4px;top:127.6px;width:249.6px;height:403.7px;background:#F5F5F5;"></div>
<svg class="b" style="left:690.3px;top:134.5px;" width="6.3" height="3.5" viewBox="0 0 6.3 3.5"><path d="M0 3.5 H6.3 L3.15 0 Z" fill="#868999"/></svg>
<div class="b" style="left:690.3px;top:200.3px;width:5.8px;height:224.4px;background:#C2C3C9;"></div>
<svg class="b" style="left:690.2px;top:523.5px;" width="6.3" height="4" viewBox="0 0 6.3 4"><path d="M0 0 H6.3 L3.15 4 Z" fill="#868999"/></svg>
<div class="b" style="left:449.4px;top:508.3px;width:237.8px;height:13.5px;background:#0E72C4;"></div>
<svg class="b" style="left:482px;top:133.4px;" width="5" height="7.5" viewBox="0 0 5 7.5"><path d="M0.7 0.8 L4.1 3.75 L0.7 6.7 Z" fill="none" stroke="#1E1E1E" stroke-width="1.25" stroke-linejoin="round"/></svg>
<svg class="b" style="left:490.9px;top:134.4px;" width="4.4" height="5.6" viewBox="0 0 4.4 5.6"><rect x="0" y="2.2" width="4.2" height="3.3" fill="#1BA1E2"/><path d="M0.9 2.4 V1.6 Q2.1 0.1 3.3 1.6 V2.4" fill="none" stroke="#1BA1E2" stroke-width="0.9"/><rect x="1" y="3.5" width="2.2" height="0.6" fill="#9AD3F0"/></svg>
<svg class="b" style="left:497.09999999999997px;top:134.0px;" width="9" height="6.5" viewBox="0 0 9 6.5"><path d="M4.6 1.3 A2.5 2.6 0 1 0 4.6 5.2" fill="none" stroke="#2F8A2F" stroke-width="1.6"/><path d="M5.9 0.6 V3.6 M7.5 0.6 V3.6 M5.2 1.4 H8.2 M5.2 2.8 H8.2" stroke="#2F8A2F" stroke-width="0.7"/></svg>
<div class="t " style="left:510.10px;top:133.59px;font-size:8.52px;color:#1E1E1E;">FilterConfig.cs</div>
<svg class="b" style="left:482px;top:146.0px;" width="5" height="7.5" viewBox="0 0 5 7.5"><path d="M0.7 0.8 L4.1 3.75 L0.7 6.7 Z" fill="none" stroke="#1E1E1E" stroke-width="1.25" stroke-linejoin="round"/></svg>
<svg class="b" style="left:490.9px;top:147.0px;" width="4.4" height="5.6" viewBox="0 0 4.4 5.6"><rect x="0" y="2.2" width="4.2" height="3.3" fill="#1BA1E2"/><path d="M0.9 2.4 V1.6 Q2.1 0.1 3.3 1.6 V2.4" fill="none" stroke="#1BA1E2" stroke-width="0.9"/><rect x="1" y="3.5" width="2.2" height="0.6" fill="#9AD3F0"/></svg>
<svg class="b" style="left:497.09999999999997px;top:146.6px;" width="9" height="6.5" viewBox="0 0 9 6.5"><path d="M4.6 1.3 A2.5 2.6 0 1 0 4.6 5.2" fill="none" stroke="#2F8A2F" stroke-width="1.6"/><path d="M5.9 0.6 V3.6 M7.5 0.6 V3.6 M5.2 1.4 H8.2 M5.2 2.8 H8.2" stroke="#2F8A2F" stroke-width="0.7"/></svg>
<div class="t " style="left:510.10px;top:146.19px;font-size:8.52px;color:#1E1E1E;">IdentityConfig.cs</div>
<svg class="b" style="left:482px;top:158.6px;" width="5" height="7.5" viewBox="0 0 5 7.5"><path d="M0.7 0.8 L4.1 3.75 L0.7 6.7 Z" fill="none" stroke="#1E1E1E" stroke-width="1.25" stroke-linejoin="round"/></svg>
<svg class="b" style="left:490.9px;top:159.6px;" width="4.4" height="5.6" viewBox="0 0 4.4 5.6"><rect x="0" y="2.2" width="4.2" height="3.3" fill="#1BA1E2"/><path d="M0.9 2.4 V1.6 Q2.1 0.1 3.3 1.6 V2.4" fill="none" stroke="#1BA1E2" stroke-width="0.9"/><rect x="1" y="3.5" width="2.2" height="0.6" fill="#9AD3F0"/></svg>
<svg class="b" style="left:497.09999999999997px;top:159.2px;" width="9" height="6.5" viewBox="0 0 9 6.5"><path d="M4.6 1.3 A2.5 2.6 0 1 0 4.6 5.2" fill="none" stroke="#2F8A2F" stroke-width="1.6"/><path d="M5.9 0.6 V3.6 M7.5 0.6 V3.6 M5.2 1.4 H8.2 M5.2 2.8 H8.2" stroke="#2F8A2F" stroke-width="0.7"/></svg>
<div class="t " style="left:510.10px;top:158.79px;font-size:8.52px;color:#1E1E1E;">RouteConfig.cs</div>
<svg class="b" style="left:482px;top:171.20000000000002px;" width="5" height="7.5" viewBox="0 0 5 7.5"><path d="M0.7 0.8 L4.1 3.75 L0.7 6.7 Z" fill="none" stroke="#1E1E1E" stroke-width="1.25" stroke-linejoin="round"/></svg>
<svg class="b" style="left:490.9px;top:172.20000000000002px;" width="4.4" height="5.6" viewBox="0 0 4.4 5.6"><rect x="0" y="2.2" width="4.2" height="3.3" fill="#1BA1E2"/><path d="M0.9 2.4 V1.6 Q2.1 0.1 3.3 1.6 V2.4" fill="none" stroke="#1BA1E2" stroke-width="0.9"/><rect x="1" y="3.5" width="2.2" height="0.6" fill="#9AD3F0"/></svg>
<svg class="b" style="left:497.09999999999997px;top:171.8px;" width="9" height="6.5" viewBox="0 0 9 6.5"><path d="M4.6 1.3 A2.5 2.6 0 1 0 4.6 5.2" fill="none" stroke="#2F8A2F" stroke-width="1.6"/><path d="M5.9 0.6 V3.6 M7.5 0.6 V3.6 M5.2 1.4 H8.2 M5.2 2.8 H8.2" stroke="#2F8A2F" stroke-width="0.7"/></svg>
<div class="t " style="left:510.10px;top:171.39px;font-size:8.52px;color:#1E1E1E;">Startup.Auth.cs</div>
<svg class="b" style="left:469.3px;top:183.8px;" width="5" height="7.5" viewBox="0 0 5 7.5"><path d="M0.7 0.8 L4.1 3.75 L0.7 6.7 Z" fill="none" stroke="#1E1E1E" stroke-width="1.25" stroke-linejoin="round"/></svg>
<svg class="b" style="left:484.2px;top:182.9px;" width="10" height="9" viewBox="0 0 10 9"><path d="M0 1 H4 L5 2.2 H9.5 V8.5 H0 Z" fill="#DCB67A"/><path d="M0 3 H9.5" stroke="#E8CE9C" stroke-width="0.8"/></svg>
<div class="t " style="left:498.00px;top:183.99px;font-size:8.52px;color:#1E1E1E;">Content</div>
<svg class="b" style="left:467.5px;top:197.0px;" width="6" height="6" viewBox="0 0 6 6"><path d="M5.5 0.5 V5.5 H0.5 Z" fill="#1E1E1E"/></svg>
<svg class="b" style="left:484.2px;top:195.5px;" width="10" height="9" viewBox="0 0 10 9"><path d="M0.5 1 H3.5 L4.5 2 H9 V8.5 H0.5 Z" fill="#F5F5F5" stroke="#DCB67A" stroke-width="1"/><path d="M0.5 8.5 L2.5 4.2 H9.6 L8.5 8.5 Z" fill="#DCB67A"/><path d="M2.6 4.2 H9.5" stroke="#F5F5F5" stroke-width="0.6"/></svg>
<div class="t " style="left:498.00px;top:196.59px;font-size:8.52px;color:#1E1E1E;">Controllers</div>
<svg class="b" style="left:482px;top:209.0px;" width="5" height="7.5" viewBox="0 0 5 7.5"><path d="M0.7 0.8 L4.1 3.75 L0.7 6.7 Z" fill="none" stroke="#1E1E1E" stroke-width="1.25" stroke-linejoin="round"/></svg>
<svg class="b" style="left:490.9px;top:210.0px;" width="4.4" height="5.6" viewBox="0 0 4.4 5.6"><rect x="0" y="2.2" width="4.2" height="3.3" fill="#1BA1E2"/><path d="M0.9 2.4 V1.6 Q2.1 0.1 3.3 1.6 V2.4" fill="none" stroke="#1BA1E2" stroke-width="0.9"/><rect x="1" y="3.5" width="2.2" height="0.6" fill="#9AD3F0"/></svg>
<svg class="b" style="left:497.09999999999997px;top:209.6px;" width="9" height="6.5" viewBox="0 0 9 6.5"><path d="M4.6 1.3 A2.5 2.6 0 1 0 4.6 5.2" fill="none" stroke="#2F8A2F" stroke-width="1.6"/><path d="M5.9 0.6 V3.6 M7.5 0.6 V3.6 M5.2 1.4 H8.2 M5.2 2.8 H8.2" stroke="#2F8A2F" stroke-width="0.7"/></svg>
<div class="t " style="left:510.10px;top:209.19px;font-size:8.52px;color:#1E1E1E;">AccountController.cs</div>
<svg class="b" style="left:482px;top:221.6px;" width="5" height="7.5" viewBox="0 0 5 7.5"><path d="M0.7 0.8 L4.1 3.75 L0.7 6.7 Z" fill="none" stroke="#1E1E1E" stroke-width="1.25" stroke-linejoin="round"/></svg>
<svg class="b" style="left:490.9px;top:222.6px;" width="4.4" height="5.6" viewBox="0 0 4.4 5.6"><rect x="0" y="2.2" width="4.2" height="3.3" fill="#1BA1E2"/><path d="M0.9 2.4 V1.6 Q2.1 0.1 3.3 1.6 V2.4" fill="none" stroke="#1BA1E2" stroke-width="0.9"/><rect x="1" y="3.5" width="2.2" height="0.6" fill="#9AD3F0"/></svg>
<svg class="b" style="left:497.09999999999997px;top:222.2px;" width="9" height="6.5" viewBox="0 0 9 6.5"><path d="M4.6 1.3 A2.5 2.6 0 1 0 4.6 5.2" fill="none" stroke="#2F8A2F" stroke-width="1.6"/><path d="M5.9 0.6 V3.6 M7.5 0.6 V3.6 M5.2 1.4 H8.2 M5.2 2.8 H8.2" stroke="#2F8A2F" stroke-width="0.7"/></svg>
<div class="t " style="left:510.10px;top:221.79px;font-size:8.52px;color:#1E1E1E;">HelloWorldController.cs</div>
<svg class="b" style="left:482px;top:234.20000000000002px;" width="5" height="7.5" viewBox="0 0 5 7.5"><path d="M0.7 0.8 L4.1 3.75 L0.7 6.7 Z" fill="none" stroke="#1E1E1E" stroke-width="1.25" stroke-linejoin="round"/></svg>
<svg class="b" style="left:490.9px;top:235.20000000000002px;" width="4.4" height="5.6" viewBox="0 0 4.4 5.6"><rect x="0" y="2.2" width="4.2" height="3.3" fill="#1BA1E2"/><path d="M0.9 2.4 V1.6 Q2.1 0.1 3.3 1.6 V2.4" fill="none" stroke="#1BA1E2" stroke-width="0.9"/><rect x="1" y="3.5" width="2.2" height="0.6" fill="#9AD3F0"/></svg>
<svg class="b" style="left:497.09999999999997px;top:234.8px;" width="9" height="6.5" viewBox="0 0 9 6.5"><path d="M4.6 1.3 A2.5 2.6 0 1 0 4.6 5.2" fill="none" stroke="#2F8A2F" stroke-width="1.6"/><path d="M5.9 0.6 V3.6 M7.5 0.6 V3.6 M5.2 1.4 H8.2 M5.2 2.8 H8.2" stroke="#2F8A2F" stroke-width="0.7"/></svg>
<div class="t " style="left:510.10px;top:234.39px;font-size:8.52px;color:#1E1E1E;">HomeController.cs</div>
<svg class="b" style="left:482px;top:246.79999999999998px;" width="5" height="7.5" viewBox="0 0 5 7.5"><path d="M0.7 0.8 L4.1 3.75 L0.7 6.7 Z" fill="none" stroke="#1E1E1E" stroke-width="1.25" stroke-linejoin="round"/></svg>
<svg class="b" style="left:490.9px;top:247.79999999999998px;" width="4.4" height="5.6" viewBox="0 0 4.4 5.6"><rect x="0" y="2.2" width="4.2" height="3.3" fill="#1BA1E2"/><path d="M0.9 2.4 V1.6 Q2.1 0.1 3.3 1.6 V2.4" fill="none" stroke="#1BA1E2" stroke-width="0.9"/><rect x="1" y="3.5" width="2.2" height="0.6" fill="#9AD3F0"/></svg>
<svg class="b" style="left:497.09999999999997px;top:247.39999999999998px;" width="9" height="6.5" viewBox="0 0 9 6.5"><path d="M4.6 1.3 A2.5 2.6 0 1 0 4.6 5.2" fill="none" stroke="#2F8A2F" stroke-width="1.6"/><path d="M5.9 0.6 V3.6 M7.5 0.6 V3.6 M5.2 1.4 H8.2 M5.2 2.8 H8.2" stroke="#2F8A2F" stroke-width="0.7"/></svg>
<div class="t " style="left:510.10px;top:246.99px;font-size:8.52px;color:#1E1E1E;">ManageController.cs</div>
<svg class="b" style="left:482px;top:259.4px;" width="5" height="7.5" viewBox="0 0 5 7.5"><path d="M0.7 0.8 L4.1 3.75 L0.7 6.7 Z" fill="none" stroke="#1E1E1E" stroke-width="1.25" stroke-linejoin="round"/></svg>
<svg class="b" style="left:490.5px;top:260.0px;" width="6" height="6" viewBox="0 0 6 6"><path d="M0.5 3.5 L2 5.2 L5.5 0.5" fill="none" stroke="#E51400" stroke-width="1.2"/></svg>
<svg class="b" style="left:497.09999999999997px;top:260.0px;" width="9" height="6.5" viewBox="0 0 9 6.5"><path d="M4.6 1.3 A2.5 2.6 0 1 0 4.6 5.2" fill="none" stroke="#2F8A2F" stroke-width="1.6"/><path d="M5.9 0.6 V3.6 M7.5 0.6 V3.6 M5.2 1.4 H8.2 M5.2 2.8 H8.2" stroke="#2F8A2F" stroke-width="0.7"/></svg>
<div class="t " style="left:510.10px;top:259.59px;font-size:8.52px;color:#1E1E1E;">MoviesController.cs</div>
<svg class="b" style="left:469.3px;top:272.0px;" width="5" height="7.5" viewBox="0 0 5 7.5"><path d="M0.7 0.8 L4.1 3.75 L0.7 6.7 Z" fill="none" stroke="#1E1E1E" stroke-width="1.25" stroke-linejoin="round"/></svg>
<svg class="b" style="left:484.2px;top:271.1px;" width="10" height="9" viewBox="0 0 10 9"><path d="M0 1 H4 L5 2.2 H9.5 V8.5 H0 Z" fill="#DCB67A"/><path d="M0 3 H9.5" stroke="#E8CE9C" stroke-width="0.8"/></svg>
<div class="t " style="left:498.00px;top:272.19px;font-size:8.52px;color:#1E1E1E;">fonts</div>
<svg class="b" style="left:467.5px;top:285.2px;" width="6" height="6" viewBox="0 0 6 6"><path d="M5.5 0.5 V5.5 H0.5 Z" fill="#1E1E1E"/></svg>
<svg class="b" style="left:484.2px;top:283.7px;" width="10" height="9" viewBox="0 0 10 9"><path d="M0.5 1 H3.5 L4.5 2 H9 V8.5 H0.5 Z" fill="#F5F5F5" stroke="#DCB67A" stroke-width="1"/><path d="M0.5 8.5 L2.5 4.2 H9.6 L8.5 8.5 Z" fill="#DCB67A"/><path d="M2.6 4.2 H9.5" stroke="#F5F5F5" stroke-width="0.6"/></svg>
<div class="t " style="left:498.00px;top:284.79px;font-size:8.52px;color:#1E1E1E;">Models</div>
<svg class="b" style="left:482px;top:297.19999999999993px;" width="5" height="7.5" viewBox="0 0 5 7.5"><path d="M0.7 0.8 L4.1 3.75 L0.7 6.7 Z" fill="none" stroke="#1E1E1E" stroke-width="1.25" stroke-linejoin="round"/></svg>
<svg class="b" style="left:490.9px;top:298.19999999999993px;" width="4.4" height="5.6" viewBox="0 0 4.4 5.6"><rect x="0" y="2.2" width="4.2" height="3.3" fill="#1BA1E2"/><path d="M0.9 2.4 V1.6 Q2.1 0.1 3.3 1.6 V2.4" fill="none" stroke="#1BA1E2" stroke-width="0.9"/><rect x="1" y="3.5" width="2.2" height="0.6" fill="#9AD3F0"/></svg>
<svg class="b" style="left:497.09999999999997px;top:297.79999999999995px;" width="9" height="6.5" viewBox="0 0 9 6.5"><path d="M4.6 1.3 A2.5 2.6 0 1 0 4.6 5.2" fill="none" stroke="#2F8A2F" stroke-width="1.6"/><path d="M5.9 0.6 V3.6 M7.5 0.6 V3.6 M5.2 1.4 H8.2 M5.2 2.8 H8.2" stroke="#2F8A2F" stroke-width="0.7"/></svg>
<div class="t " style="left:510.10px;top:297.39px;font-size:8.52px;color:#1E1E1E;">AccountViewModels.cs</div>
<svg class="b" style="left:482px;top:309.79999999999995px;" width="5" height="7.5" viewBox="0 0 5 7.5"><path d="M0.7 0.8 L4.1 3.75 L0.7 6.7 Z" fill="none" stroke="#1E1E1E" stroke-width="1.25" stroke-linejoin="round"/></svg>
<svg class="b" style="left:490.9px;top:310.79999999999995px;" width="4.4" height="5.6" viewBox="0 0 4.4 5.6"><rect x="0" y="2.2" width="4.2" height="3.3" fill="#1BA1E2"/><path d="M0.9 2.4 V1.6 Q2.1 0.1 3.3 1.6 V2.4" fill="none" stroke="#1BA1E2" stroke-width="0.9"/><rect x="1" y="3.5" width="2.2" height="0.6" fill="#9AD3F0"/></svg>
<svg class="b" style="left:497.09999999999997px;top:310.4px;" width="9" height="6.5" viewBox="0 0 9 6.5"><path d="M4.6 1.3 A2.5 2.6 0 1 0 4.6 5.2" fill="none" stroke="#2F8A2F" stroke-width="1.6"/><path d="M5.9 0.6 V3.6 M7.5 0.6 V3.6 M5.2 1.4 H8.2 M5.2 2.8 H8.2" stroke="#2F8A2F" stroke-width="0.7"/></svg>
<div class="t " style="left:510.10px;top:309.99px;font-size:8.52px;color:#1E1E1E;">IdentityModels.cs</div>
<svg class="b" style="left:482px;top:322.4px;" width="5" height="7.5" viewBox="0 0 5 7.5"><path d="M0.7 0.8 L4.1 3.75 L0.7 6.7 Z" fill="none" stroke="#1E1E1E" stroke-width="1.25" stroke-linejoin="round"/></svg>
<svg class="b" style="left:490.9px;top:323.4px;" width="4.4" height="5.6" viewBox="0 0 4.4 5.6"><rect x="0" y="2.2" width="4.2" height="3.3" fill="#1BA1E2"/><path d="M0.9 2.4 V1.6 Q2.1 0.1 3.3 1.6 V2.4" fill="none" stroke="#1BA1E2" stroke-width="0.9"/><rect x="1" y="3.5" width="2.2" height="0.6" fill="#9AD3F0"/></svg>
<svg class="b" style="left:497.09999999999997px;top:323.0px;" width="9" height="6.5" viewBox="0 0 9 6.5"><path d="M4.6 1.3 A2.5 2.6 0 1 0 4.6 5.2" fill="none" stroke="#2F8A2F" stroke-width="1.6"/><path d="M5.9 0.6 V3.6 M7.5 0.6 V3.6 M5.2 1.4 H8.2 M5.2 2.8 H8.2" stroke="#2F8A2F" stroke-width="0.7"/></svg>
<div class="t " style="left:510.10px;top:322.59px;font-size:8.52px;color:#1E1E1E;">ManageViewModels.cs</div>
<svg class="b" style="left:482px;top:335.0px;" width="5" height="7.5" viewBox="0 0 5 7.5"><path d="M0.7 0.8 L4.1 3.75 L0.7 6.7 Z" fill="none" stroke="#1E1E1E" stroke-width="1.25" stroke-linejoin="round"/></svg>
<svg class="b" style="left:490.9px;top:336.0px;" width="4.4" height="5.6" viewBox="0 0 4.4 5.6"><rect x="0" y="2.2" width="4.2" height="3.3" fill="#1BA1E2"/><path d="M0.9 2.4 V1.6 Q2.1 0.1 3.3 1.6 V2.4" fill="none" stroke="#1BA1E2" stroke-width="0.9"/><rect x="1" y="3.5" width="2.2" height="0.6" fill="#9AD3F0"/></svg>
<svg class="b" style="left:497.09999999999997px;top:335.6px;" width="9" height="6.5" viewBox="0 0 9 6.5"><path d="M4.6 1.3 A2.5 2.6 0 1 0 4.6 5.2" fill="none" stroke="#2F8A2F" stroke-width="1.6"/><path d="M5.9 0.6 V3.6 M7.5 0.6 V3.6 M5.2 1.4 H8.2 M5.2 2.8 H8.2" stroke="#2F8A2F" stroke-width="0.7"/></svg>
<div class="t " style="left:510.10px;top:335.19px;font-size:8.52px;color:#1E1E1E;">Movie.cs</div>
<svg class="b" style="left:469.3px;top:347.59999999999997px;" width="5" height="7.5" viewBox="0 0 5 7.5"><path d="M0.7 0.8 L4.1 3.75 L0.7 6.7 Z" fill="none" stroke="#1E1E1E" stroke-width="1.25" stroke-linejoin="round"/></svg>
<svg class="b" style="left:484.2px;top:346.7px;" width="10" height="9" viewBox="0 0 10 9"><path d="M0 1 H4 L5 2.2 H9.5 V8.5 H0 Z" fill="#DCB67A"/><path d="M0 3 H9.5" stroke="#E8CE9C" stroke-width="0.8"/></svg>
<div class="t " style="left:498.00px;top:347.79px;font-size:8.52px;color:#1E1E1E;">Scripts</div>
<svg class="b" style="left:467.5px;top:360.79999999999995px;" width="6" height="6" viewBox="0 0 6 6"><path d="M5.5 0.5 V5.5 H0.5 Z" fill="#1E1E1E"/></svg>
<svg class="b" style="left:484.2px;top:359.29999999999995px;" width="10" height="9" viewBox="0 0 10 9"><path d="M0.5 1 H3.5 L4.5 2 H9 V8.5 H0.5 Z" fill="#F5F5F5" stroke="#DCB67A" stroke-width="1"/><path d="M0.5 8.5 L2.5 4.2 H9.6 L8.5 8.5 Z" fill="#DCB67A"/><path d="M2.6 4.2 H9.5" stroke="#F5F5F5" stroke-width="0.6"/></svg>
<div class="t " style="left:498.00px;top:360.39px;font-size:8.52px;color:#1E1E1E;">Views</div>
<svg class="b" style="left:482px;top:372.79999999999995px;" width="5" height="7.5" viewBox="0 0 5 7.5"><path d="M0.7 0.8 L4.1 3.75 L0.7 6.7 Z" fill="none" stroke="#1E1E1E" stroke-width="1.25" stroke-linejoin="round"/></svg>
<svg class="b" style="left:497px;top:371.9px;" width="10" height="9" viewBox="0 0 10 9"><path d="M0 1 H4 L5 2.2 H9.5 V8.5 H0 Z" fill="#DCB67A"/><path d="M0 3 H9.5" stroke="#E8CE9C" stroke-width="0.8"/></svg>
<div class="t " style="left:510.10px;top:372.99px;font-size:8.52px;color:#1E1E1E;">Account</div>
<svg class="b" style="left:480.5px;top:386.0px;" width="6" height="6" viewBox="0 0 6 6"><path d="M5.5 0.5 V5.5 H0.5 Z" fill="#1E1E1E"/></svg>
<svg class="b" style="left:497px;top:384.5px;" width="10" height="9" viewBox="0 0 10 9"><path d="M0.5 1 H3.5 L4.5 2 H9 V8.5 H0.5 Z" fill="#F5F5F5" stroke="#DCB67A" stroke-width="1"/><path d="M0.5 8.5 L2.5 4.2 H9.6 L8.5 8.5 Z" fill="#DCB67A"/><path d="M2.6 4.2 H9.5" stroke="#F5F5F5" stroke-width="0.6"/></svg>
<div class="t " style="left:510.10px;top:385.59px;font-size:8.52px;color:#1E1E1E;">HelloWorld</div>
<svg class="b" style="left:503.7px;top:398.59999999999997px;" width="4.4" height="5.6" viewBox="0 0 4.4 5.6"><rect x="0" y="2.2" width="4.2" height="3.3" fill="#1BA1E2"/><path d="M0.9 2.4 V1.6 Q2.1 0.1 3.3 1.6 V2.4" fill="none" stroke="#1BA1E2" stroke-width="0.9"/><rect x="1" y="3.5" width="2.2" height="0.6" fill="#9AD3F0"/></svg>
<svg class="b" style="left:507.5px;top:398.59999999999997px;" width="11" height="6.5" viewBox="0 0 11 6.5"><rect x="0" y="0" width="11" height="6.5" fill="none"/><path d="M1.5 0.5 H0.5 V6 H1.5 M9.5 0.5 H10.5 V6 H9.5" fill="none" stroke="#424242" stroke-width="0.8"/><circle cx="5.5" cy="3.2" r="2" fill="none" stroke="#424242" stroke-width="0.9"/><rect x="2.2" y="1.5" width="1.2" height="3.5" fill="#424242"/><rect x="7.6" y="1.5" width="1.2" height="3.5" fill="#424242"/></svg>
<div class="t " style="left:522.90px;top:398.19px;font-size:8.52px;color:#1E1E1E;">Index.cshtml</div>
<svg class="b" style="left:503.7px;top:411.2px;" width="4.4" height="5.6" viewBox="0 0 4.4 5.6"><rect x="0" y="2.2" width="4.2" height="3.3" fill="#1BA1E2"/><path d="M0.9 2.4 V1.6 Q2.1 0.1 3.3 1.6 V2.4" fill="none" stroke="#1BA1E2" stroke-width="0.9"/><rect x="1" y="3.5" width="2.2" height="0.6" fill="#9AD3F0"/></svg>
<svg class="b" style="left:507.5px;top:411.2px;" width="11" height="6.5" viewBox="0 0 11 6.5"><rect x="0" y="0" width="11" height="6.5" fill="none"/><path d="M1.5 0.5 H0.5 V6 H1.5 M9.5 0.5 H10.5 V6 H9.5" fill="none" stroke="#424242" stroke-width="0.8"/><circle cx="5.5" cy="3.2" r="2" fill="none" stroke="#424242" stroke-width="0.9"/><rect x="2.2" y="1.5" width="1.2" height="3.5" fill="#424242"/><rect x="7.6" y="1.5" width="1.2" height="3.5" fill="#424242"/></svg>
<div class="t " style="left:522.90px;top:410.79px;font-size:8.52px;color:#1E1E1E;">Welcome.cshtml</div>
<svg class="b" style="left:482px;top:423.2px;" width="5" height="7.5" viewBox="0 0 5 7.5"><path d="M0.7 0.8 L4.1 3.75 L0.7 6.7 Z" fill="none" stroke="#1E1E1E" stroke-width="1.25" stroke-linejoin="round"/></svg>
<svg class="b" style="left:497px;top:422.3px;" width="10" height="9" viewBox="0 0 10 9"><path d="M0 1 H4 L5 2.2 H9.5 V8.5 H0 Z" fill="#DCB67A"/><path d="M0 3 H9.5" stroke="#E8CE9C" stroke-width="0.8"/></svg>
<div class="t " style="left:510.10px;top:423.39px;font-size:8.52px;color:#1E1E1E;">Home</div>
<svg class="b" style="left:482px;top:435.79999999999995px;" width="5" height="7.5" viewBox="0 0 5 7.5"><path d="M0.7 0.8 L4.1 3.75 L0.7 6.7 Z" fill="none" stroke="#1E1E1E" stroke-width="1.25" stroke-linejoin="round"/></svg>
<svg class="b" style="left:497px;top:434.9px;" width="10" height="9" viewBox="0 0 10 9"><path d="M0 1 H4 L5 2.2 H9.5 V8.5 H0 Z" fill="#DCB67A"/><path d="M0 3 H9.5" stroke="#E8CE9C" stroke-width="0.8"/></svg>
<div class="t " style="left:510.10px;top:435.99px;font-size:8.52px;color:#1E1E1E;">Manage</div>
<svg class="b" style="left:480.5px;top:449.0px;" width="6" height="6" viewBox="0 0 6 6"><path d="M5.5 0.5 V5.5 H0.5 Z" fill="#1E1E1E"/></svg>
<svg class="b" style="left:497px;top:447.5px;" width="10" height="9" viewBox="0 0 10 9"><path d="M0.5 1 H3.5 L4.5 2 H9 V8.5 H0.5 Z" fill="#F5F5F5" stroke="#DCB67A" stroke-width="1"/><path d="M0.5 8.5 L2.5 4.2 H9.6 L8.5 8.5 Z" fill="#DCB67A"/><path d="M2.6 4.2 H9.5" stroke="#F5F5F5" stroke-width="0.6"/></svg>
<div class="t " style="left:510.10px;top:448.59px;font-size:8.52px;color:#1E1E1E;">Movies</div>
<svg class="b" style="left:503.7px;top:461.59999999999997px;" width="4.4" height="5.6" viewBox="0 0 4.4 5.6"><rect x="0" y="2.2" width="4.2" height="3.3" fill="#1BA1E2"/><path d="M0.9 2.4 V1.6 Q2.1 0.1 3.3 1.6 V2.4" fill="none" stroke="#1BA1E2" stroke-width="0.9"/><rect x="1" y="3.5" width="2.2" height="0.6" fill="#9AD3F0"/></svg>
<svg class="b" style="left:507.5px;top:461.59999999999997px;" width="11" height="6.5" viewBox="0 0 11 6.5"><rect x="0" y="0" width="11" height="6.5" fill="none"/><path d="M1.5 0.5 H0.5 V6 H1.5 M9.5 0.5 H10.5 V6 H9.5" fill="none" stroke="#424242" stroke-width="0.8"/><circle cx="5.5" cy="3.2" r="2" fill="none" stroke="#424242" stroke-width="0.9"/><rect x="2.2" y="1.5" width="1.2" height="3.5" fill="#424242"/><rect x="7.6" y="1.5" width="1.2" height="3.5" fill="#424242"/></svg>
<div class="t " style="left:522.90px;top:461.19px;font-size:8.52px;color:#1E1E1E;">Create.cshtml</div>
<svg class="b" style="left:503.7px;top:474.2px;" width="4.4" height="5.6" viewBox="0 0 4.4 5.6"><rect x="0" y="2.2" width="4.2" height="3.3" fill="#1BA1E2"/><path d="M0.9 2.4 V1.6 Q2.1 0.1 3.3 1.6 V2.4" fill="none" stroke="#1BA1E2" stroke-width="0.9"/><rect x="1" y="3.5" width="2.2" height="0.6" fill="#9AD3F0"/></svg>
<svg class="b" style="left:507.5px;top:474.2px;" width="11" height="6.5" viewBox="0 0 11 6.5"><rect x="0" y="0" width="11" height="6.5" fill="none"/><path d="M1.5 0.5 H0.5 V6 H1.5 M9.5 0.5 H10.5 V6 H9.5" fill="none" stroke="#424242" stroke-width="0.8"/><circle cx="5.5" cy="3.2" r="2" fill="none" stroke="#424242" stroke-width="0.9"/><rect x="2.2" y="1.5" width="1.2" height="3.5" fill="#424242"/><rect x="7.6" y="1.5" width="1.2" height="3.5" fill="#424242"/></svg>
<div class="t " style="left:522.90px;top:473.79px;font-size:8.52px;color:#1E1E1E;">Delete.cshtml</div>
<svg class="b" style="left:503.7px;top:486.8px;" width="4.4" height="5.6" viewBox="0 0 4.4 5.6"><rect x="0" y="2.2" width="4.2" height="3.3" fill="#1BA1E2"/><path d="M0.9 2.4 V1.6 Q2.1 0.1 3.3 1.6 V2.4" fill="none" stroke="#1BA1E2" stroke-width="0.9"/><rect x="1" y="3.5" width="2.2" height="0.6" fill="#9AD3F0"/></svg>
<svg class="b" style="left:507.5px;top:486.8px;" width="11" height="6.5" viewBox="0 0 11 6.5"><rect x="0" y="0" width="11" height="6.5" fill="none"/><path d="M1.5 0.5 H0.5 V6 H1.5 M9.5 0.5 H10.5 V6 H9.5" fill="none" stroke="#424242" stroke-width="0.8"/><circle cx="5.5" cy="3.2" r="2" fill="none" stroke="#424242" stroke-width="0.9"/><rect x="2.2" y="1.5" width="1.2" height="3.5" fill="#424242"/><rect x="7.6" y="1.5" width="1.2" height="3.5" fill="#424242"/></svg>
<div class="t " style="left:522.90px;top:486.39px;font-size:8.52px;color:#1E1E1E;">Details.cshtml</div>
<svg class="b" style="left:503.7px;top:499.4px;" width="4.4" height="5.6" viewBox="0 0 4.4 5.6"><rect x="0" y="2.2" width="4.2" height="3.3" fill="#1BA1E2"/><path d="M0.9 2.4 V1.6 Q2.1 0.1 3.3 1.6 V2.4" fill="none" stroke="#1BA1E2" stroke-width="0.9"/><rect x="1" y="3.5" width="2.2" height="0.6" fill="#9AD3F0"/></svg>
<svg class="b" style="left:507.5px;top:499.4px;" width="11" height="6.5" viewBox="0 0 11 6.5"><rect x="0" y="0" width="11" height="6.5" fill="none"/><path d="M1.5 0.5 H0.5 V6 H1.5 M9.5 0.5 H10.5 V6 H9.5" fill="none" stroke="#424242" stroke-width="0.8"/><circle cx="5.5" cy="3.2" r="2" fill="none" stroke="#424242" stroke-width="0.9"/><rect x="2.2" y="1.5" width="1.2" height="3.5" fill="#424242"/><rect x="7.6" y="1.5" width="1.2" height="3.5" fill="#424242"/></svg>
<div class="t " style="left:522.90px;top:498.99px;font-size:8.52px;color:#1E1E1E;">Edit.cshtml</div>
<svg class="b" style="left:502.5px;top:512.0px;" width="6" height="6" viewBox="0 0 6 6"><path d="M0.5 3.5 L2 5.2 L5.5 0.5" fill="none" stroke="#E51400" stroke-width="1.2"/></svg>
<svg class="b" style="left:507.5px;top:512.0px;" width="11" height="6.5" viewBox="0 0 11 6.5"><rect x="0" y="0" width="11" height="6.5" fill="#fff"/><path d="M1.5 0.5 H0.5 V6 H1.5 M9.5 0.5 H10.5 V6 H9.5" fill="none" stroke="#424242" stroke-width="0.8"/><circle cx="5.5" cy="3.2" r="2" fill="none" stroke="#424242" stroke-width="0.9"/><rect x="2.2" y="1.5" width="1.2" height="3.5" fill="#424242"/><rect x="7.6" y="1.5" width="1.2" height="3.5" fill="#424242"/></svg>
<div class="t " style="left:522.90px;top:511.59px;font-size:8.52px;color:#FFFFFF;">Index.cshtml</div>
<svg class="b" style="left:480.5px;top:524.5999999999999px;" width="6" height="6" viewBox="0 0 6 6"><path d="M5.5 0.5 V5.5 H0.5 Z" fill="#1E1E1E"/></svg>
<svg class="b" style="left:497px;top:523.0999999999999px;" width="10" height="9" viewBox="0 0 10 9"><path d="M0.5 1 H3.5 L4.5 2 H9 V8.5 H0.5 Z" fill="#F5F5F5" stroke="#DCB67A" stroke-width="1"/><path d="M0.5 8.5 L2.5 4.2 H9.6 L8.5 8.5 Z" fill="#DCB67A"/><path d="M2.6 4.2 H9.5" stroke="#F5F5F5" stroke-width="0.6"/></svg>
<div class="t " style="left:510.10px;top:524.19px;font-size:8.52px;color:#1E1E1E;">Shared</div>
<div class="t" style="left:0px;top:78px;font-size:8.7px;color:#1E1E1E;transform-origin:0 0;transform:translate(709.36px,0) rotate(90deg) scaleX(0.9268);">Solution Explorer</div>
<div class="b" style="left:713px;top:77px;width:1px;height:63.400000000000006px;background:#D6D8E2;"></div>
<div class="t" style="left:0px;top:148.8px;font-size:8.7px;color:#1E1E1E;transform-origin:0 0;transform:translate(709.36px,0) rotate(90deg) scaleX(0.9040);">Team Explorer</div>
<div class="b" style="left:713px;top:147.8px;width:1px;height:52.69999999999999px;background:#D6D8E2;"></div>
<div class="t" style="left:0px;top:208.7px;font-size:8.7px;color:#1E1E1E;transform-origin:0 0;transform:translate(709.36px,0) rotate(90deg) scaleX(0.9408);">Properties</div>
<div class="b" style="left:713px;top:207.7px;width:1px;height:39.30000000000001px;background:#D6D8E2;"></div>
<div class="t" style="left:0px;top:254.7px;font-size:8.7px;color:#1E1E1E;transform-origin:0 0;transform:translate(709.36px,0) rotate(90deg) scaleX(0.9982);">Notifications</div>
<div class="b" style="left:713px;top:253.7px;width:1px;height:49.30000000000001px;background:#D6D8E2;"></div>
<div class="t" style="left:0px;top:310.6px;font-size:8.7px;color:#1E1E1E;transform-origin:0 0;transform:translate(709.36px,0) rotate(90deg) scaleX(0.9527);">Diagnostic Tools</div>
<div class="b" style="left:713px;top:309.6px;width:1px;height:62.19999999999999px;background:#D6D8E2;"></div>
<div class="b" style="left:20px;top:520px;width:42.4px;height:11.3px;background:#fff;border:1px solid #CCCEDB;box-sizing:border-box;"></div>
<div class="t " style="left:21.20px;top:522.32px;font-size:8.6px;color:#1E1E1E;transform-origin:0 0;transform:scaleX(0.9336);">82 %</div>
<svg class="b" style="left:56px;top:526px;" width="4" height="2.2" viewBox="0 0 4 2.2"><path d="M0 0 H4 L2 2.2 Z" fill="#1E1E1E"/></svg>
<div class="b" style="left:63px;top:520px;width:155.4px;height:11.3px;background:#fff;border:1px solid #CCCEDB;border-left:none;box-sizing:border-box;"></div>
<svg class="b" style="left:70.7px;top:523.5px;" width="4" height="5.6" viewBox="0 0 4 5.6"><path d="M3.3 0.5 L0.9 2.8 L3.3 5.1" fill="none" stroke="#1E1E1E" stroke-width="1.2"/></svg>
<div class="t " style="left:77.70px;top:522.54px;font-size:7.4px;color:#1E1E1E;transform-origin:0 0;transform:scaleX(0.9690);">Isaac Levin, 1 day ago | 1 author, 1 change</div>
<div class="t " style="left:20.70px;top:538.17px;font-size:8.3px;color:#1E1E1E;transform-origin:0 0;transform:scaleX(0.9421);">Call Stack</div>
<div class="b" style="left:20.2px;top:550px;width:36.2px;height:2.6px;background:#CDD0DE;"></div>
<div class="t " style="left:64.70px;top:538.17px;font-size:8.3px;color:#1E1E1E;transform-origin:0 0;transform:scaleX(0.9834);">Breakpoints</div>
<div class="b" style="left:64.2px;top:550px;width:44.099999999999994px;height:2.6px;background:#CDD0DE;"></div>
<div class="t " style="left:116.40px;top:538.17px;font-size:8.3px;color:#1E1E1E;transform-origin:0 0;transform:scaleX(0.9834);">Exception Settings</div>
<div class="b" style="left:115.9px;top:550px;width:68.6px;height:2.6px;background:#CDD0DE;"></div>
<div class="t " style="left:192.20px;top:538.17px;font-size:8.3px;color:#1E1E1E;transform-origin:0 0;transform:scaleX(1.0313);">Command Window</div>
<div class="b" style="left:191.7px;top:550px;width:73.30000000000001px;height:2.6px;background:#CDD0DE;"></div>
<div class="t " style="left:273.30px;top:538.17px;font-size:8.3px;color:#1E1E1E;transform-origin:0 0;transform:scaleX(1.0273);">Immediate Window</div>
<div class="b" style="left:272.8px;top:550px;width:73.5px;height:2.6px;background:#CDD0DE;"></div>
<div class="t " style="left:354.60px;top:538.17px;font-size:8.3px;color:#1E1E1E;transform-origin:0 0;transform:scaleX(1.0516);">Output</div>
<div class="b" style="left:354.1px;top:550px;width:27.19999999999999px;height:2.6px;background:#CDD0DE;"></div>
<div class="t " style="left:389.60px;top:538.17px;font-size:8.3px;color:#1E1E1E;transform-origin:0 0;transform:scaleX(0.9595);">Error List</div>
<div class="b" style="left:389.1px;top:550px;width:33.299999999999955px;height:2.6px;background:#CDD0DE;"></div>
<div class="t " style="left:430.20px;top:538.17px;font-size:8.3px;color:#1E1E1E;transform-origin:0 0;transform:scaleX(0.9599);">Task Runner Explorer</div>
<div class="b" style="left:429.7px;top:550px;width:77.60000000000002px;height:2.6px;background:#CDD0DE;"></div>
<div class="t " style="left:515.20px;top:538.17px;font-size:8.3px;color:#1E1E1E;transform-origin:0 0;transform:scaleX(1.0177);">Autos</div>
<div class="b" style="left:514.7px;top:550px;width:22.59999999999991px;height:2.6px;background:#CDD0DE;"></div>
<div class="t " style="left:545.30px;top:538.17px;font-size:8.3px;color:#1E1E1E;transform-origin:0 0;transform:scaleX(0.9462);">Locals</div>
<div class="b" style="left:544.8px;top:550px;width:23.700000000000045px;height:2.6px;background:#CDD0DE;"></div>
<div class="t " style="left:576.80px;top:538.17px;font-size:8.3px;color:#1E1E1E;transform-origin:0 0;transform:scaleX(0.9855);">Watch 1</div>
<div class="b" style="left:576.3px;top:550px;width:30.700000000000045px;height:2.6px;background:#CDD0DE;"></div>
<div class="t " style="left:615.10px;top:538.17px;font-size:8.3px;color:#1E1E1E;transform-origin:0 0;transform:scaleX(0.9697);">Find Symbol Results</div>
<div class="b" style="left:614.6px;top:550px;width:74.79999999999995px;height:2.6px;background:#CDD0DE;"></div>
<div class="b" style="left:0px;top:554.2px;width:714px;height:13.8px;background:#CA5100;"></div>
<svg class="b" style="left:2px;top:556.5px;" width="11" height="9" viewBox="0 0 11 9"><path d="M3 0.7 H10.3 L8 8.3 H0.7 Z" fill="none" stroke="#fff" stroke-width="1"/></svg>
<div class="t " style="left:18.10px;top:558.09px;font-size:8.4px;color:#fff;transform-origin:0 0;transform:scaleX(0.9143);">Ready</div>
<div class="t " style="left:134.80px;top:558.09px;font-size:8.4px;color:#fff;transform-origin:0 0;transform:scaleX(0.8945);">Ln 18</div>
<div class="t " style="left:199.00px;top:558.09px;font-size:8.4px;color:#fff;transform-origin:0 0;transform:scaleX(0.9639);">Col 5</div>
<div class="t " style="left:263.20px;top:558.09px;font-size:8.4px;color:#fff;transform-origin:0 0;transform:scaleX(0.9638);">Ch 5</div>
<div class="t " style="left:358.90px;top:558.09px;font-size:8.4px;color:#fff;transform-origin:0 0;transform:scaleX(0.8998);">INS</div>
<svg class="b" style="left:394px;top:557.5px;" width="8" height="9" viewBox="0 0 8 9"><rect x="0" y="0" width="8" height="2.5" fill="#fff"/><rect x="0" y="3.2" width="8" height="2.5" fill="#fff"/><rect x="0" y="6.4" width="8" height="2.5" fill="#fff"/><rect x="5" y="0.7" width="2" height="1" fill="#CA5100"/><rect x="5" y="3.9" width="2" height="1" fill="#CA5100"/><rect x="5" y="7.1" width="2" height="1" fill="#CA5100"/></svg>
<svg class="b" style="left:408.5px;top:560.5px;" width="6" height="3.5" viewBox="0 0 6 3.5"><path d="M0 3.5 H6 L3 0 Z" fill="#fff"/></svg>
<svg class="b" style="left:482.3px;top:558px;" width="6.5" height="8" viewBox="0 0 6.5 8"><path d="M3.2 8 V1 M0.5 3.5 L3.2 0.8 L5.9 3.5" fill="none" stroke="#fff" stroke-width="1.2"/></svg>
<div class="t " style="left:494.90px;top:558.09px;font-size:8.4px;color:#fff;transform-origin:0 0;transform:scaleX(0.8777);">0</div>
<svg class="b" style="left:517px;top:558px;" width="8.5" height="8" viewBox="0 0 8.5 8"><path d="M0.5 7.5 L1 5.5 L6 0.5 L8 2.5 L3 7.5 Z" fill="#fff"/></svg>
<div class="t " style="left:530.00px;top:558.09px;font-size:8.4px;color:#fff;transform-origin:0 0;transform:scaleX(0.9848);">4</div>
<svg class="b" style="left:550.4px;top:557.3px;" width="10" height="10" viewBox="0 0 10 10"><path d="M5 0 L10 5 L5 10 L0 5 Z" fill="#fff"/><circle cx="5" cy="3" r="0.9" fill="#CA5100"/><circle cx="5" cy="7" r="0.9" fill="#CA5100"/><path d="M5 3 V7" stroke="#CA5100" stroke-width="0.7"/></svg>
<div class="t " style="left:565.50px;top:558.09px;font-size:8.4px;color:#fff;transform-origin:0 0;transform:scaleX(0.9900);">aspnet-docs</div>
<svg class="b" style="left:627.2px;top:557.6px;" width="9.6" height="9" viewBox="0 0 9.6 9"><circle cx="1.5" cy="1.5" r="1.3" fill="#fff"/><circle cx="8.1" cy="1.5" r="1.3" fill="#fff"/><circle cx="4.8" cy="7.5" r="1.3" fill="#fff"/><path d="M1.5 1.5 L4.8 4.8 L8.1 1.5 M4.8 4.8 V7.5" fill="none" stroke="#fff" stroke-width="1.3"/></svg>
<div class="t " style="left:641.00px;top:558.09px;font-size:8.4px;color:#fff;transform-origin:0 0;transform:scaleX(0.9945);">4557-work</div>
<svg class="b" style="left:684.6px;top:560.5px;" width="5.6" height="3.5" viewBox="0 0 5.6 3.5"><path d="M0 3.5 H5.6 L2.8 0 Z" fill="#fff"/></svg>
<svg class="b" style="left:706px;top:560px;" width="7" height="7" viewBox="0 0 7 7"><rect x="5" y="5" width="1" height="1" fill="#E8A07A"/><rect x="3" y="5" width="1" height="1" fill="#E8A07A"/><rect x="5" y="3" width="1" height="1" fill="#E8A07A"/></svg>
<div class="b" style="left:62.3px;top:178.8px;width:2.8px;height:80.8px;background:#5AD35A;"></div>
<div class="b" style="left:72px;top:242.3px;width:374.5px;height:7.4px;border:1px solid #EAEAF2;border-right:none;box-sizing:border-box;"></div>
<div class="b" style="left:68.8px;top:166.6px;width:0.9px;height:67.9px;background:#BDBDBD;"></div>
<div class="b" style="left:69.2px;top:205px;width:2.2px;height:0.9px;background:#BDBDBD;"></div>
<div class="b" style="left:69.2px;top:234px;width:2.2px;height:0.9px;background:#BDBDBD;"></div>
<div class="b" style="left:68.8px;top:266.8px;width:0.9px;height:253.2px;background:#BDBDBD;"></div>
<div class="b" style="left:69.2px;top:307.3px;width:2.2px;height:0.9px;background:#BDBDBD;"></div>
<div class="b" style="left:69.2px;top:337.0px;width:2.2px;height:0.9px;background:#BDBDBD;"></div>
<div class="b" style="left:69.2px;top:366.0px;width:2.2px;height:0.9px;background:#BDBDBD;"></div>
<div class="b" style="left:69.2px;top:395.8px;width:2.2px;height:0.9px;background:#BDBDBD;"></div>
<div class="b" style="left:69.2px;top:415.0px;width:2.2px;height:0.9px;background:#BDBDBD;"></div>
<div class="b" style="left:69.2px;top:471.1px;width:2.2px;height:0.9px;background:#BDBDBD;"></div>
<div class="b" style="left:69.2px;top:500.70000000000005px;width:2.2px;height:0.9px;background:#BDBDBD;"></div>
<svg class="b" style="left:66.4px;top:160.7px;" width="5.6" height="5.6" viewBox="0 0 5.6 5.6"><rect x="0.45" y="0.45" width="4.7" height="4.7" fill="#fff" stroke="#BDBDBD" stroke-width="0.9"/><rect x="1.5" y="2.4" width="2.6" height="0.8" fill="#555555"/></svg>
<svg class="b" style="left:66.4px;top:197.0px;" width="5.6" height="5.6" viewBox="0 0 5.6 5.6"><rect x="0.45" y="0.45" width="4.7" height="4.7" fill="#fff" stroke="#BDBDBD" stroke-width="0.9"/><rect x="1.5" y="2.4" width="2.6" height="0.8" fill="#555555"/></svg>
<svg class="b" style="left:66.4px;top:260.9px;" width="5.6" height="5.6" viewBox="0 0 5.6 5.6"><rect x="0.45" y="0.45" width="4.7" height="4.7" fill="#fff" stroke="#BDBDBD" stroke-width="0.9"/><rect x="1.5" y="2.4" width="2.6" height="0.8" fill="#555555"/></svg>
<svg class="b" style="left:66.4px;top:270.9px;" width="5.6" height="5.6" viewBox="0 0 5.6 5.6"><rect x="0.45" y="0.45" width="4.7" height="4.7" fill="#fff" stroke="#BDBDBD" stroke-width="0.9"/><rect x="1.5" y="2.4" width="2.6" height="0.8" fill="#555555"/></svg>
<svg class="b" style="left:66.4px;top:310.2px;" width="5.6" height="5.6" viewBox="0 0 5.6 5.6"><rect x="0.45" y="0.45" width="4.7" height="4.7" fill="#fff" stroke="#BDBDBD" stroke-width="0.9"/><rect x="1.5" y="2.4" width="2.6" height="0.8" fill="#555555"/></svg>
<svg class="b" style="left:66.4px;top:339.4px;" width="5.6" height="5.6" viewBox="0 0 5.6 5.6"><rect x="0.45" y="0.45" width="4.7" height="4.7" fill="#fff" stroke="#BDBDBD" stroke-width="0.9"/><rect x="1.5" y="2.4" width="2.6" height="0.8" fill="#555555"/></svg>
<svg class="b" style="left:66.4px;top:368.7px;" width="5.6" height="5.6" viewBox="0 0 5.6 5.6"><rect x="0.45" y="0.45" width="4.7" height="4.7" fill="#fff" stroke="#BDBDBD" stroke-width="0.9"/><rect x="1.5" y="2.4" width="2.6" height="0.8" fill="#555555"/></svg>
<svg class="b" style="left:66.4px;top:434.59999999999997px;" width="5.6" height="5.6" viewBox="0 0 5.6 5.6"><rect x="0.45" y="0.45" width="4.7" height="4.7" fill="#fff" stroke="#BDBDBD" stroke-width="0.9"/><rect x="1.5" y="2.4" width="2.6" height="0.8" fill="#555555"/></svg>
<svg class="b" style="left:66.4px;top:473.4px;" width="5.6" height="5.6" viewBox="0 0 5.6 5.6"><rect x="0.45" y="0.45" width="4.7" height="4.7" fill="#fff" stroke="#BDBDBD" stroke-width="0.9"/><rect x="1.5" y="2.4" width="2.6" height="0.8" fill="#555555"/></svg>
<svg class="b" style="left:66.4px;top:280.5px;" width="5.6" height="5.6" viewBox="0 0 5.6 5.6"><rect x="0.45" y="0.45" width="4.7" height="4.7" fill="#fff" stroke="#BDBDBD" stroke-width="0.9"/><rect x="1.5" y="2.4" width="2.6" height="0.8" fill="#B0B0B0"/></svg>
<svg class="b" style="left:66.4px;top:444.4px;" width="5.6" height="5.6" viewBox="0 0 5.6 5.6"><rect x="0.45" y="0.45" width="4.7" height="4.7" fill="#fff" stroke="#BDBDBD" stroke-width="0.9"/><rect x="1.5" y="2.4" width="2.6" height="0.8" fill="#B0B0B0"/></svg>
<svg class="b" style="left:66.4px;top:503.0px;" width="5.6" height="5.6" viewBox="0 0 5.6 5.6"><rect x="0.45" y="0.45" width="4.7" height="4.7" fill="#fff" stroke="#BDBDBD" stroke-width="0.9"/><rect x="1.5" y="2.4" width="2.6" height="0.8" fill="#B0B0B0"/></svg>
<svg class="b" style="left:94.8px;top:205px" width="1" height="27"><pattern id="dd94205" width="1" height="3" patternUnits="userSpaceOnUse"><rect width="1" height="1.2" fill="#D4D4D4"/></pattern><rect width="1" height="27" fill="url(#dd94205)"/></svg>
<svg class="b" style="left:77.6px;top:433px" width="1" height="87"><pattern id="dd77433" width="1" height="3" patternUnits="userSpaceOnUse"><rect width="1" height="1.2" fill="#D4D4D4"/></pattern><rect width="1" height="87" fill="url(#dd77433)"/></svg>
</body></html>
